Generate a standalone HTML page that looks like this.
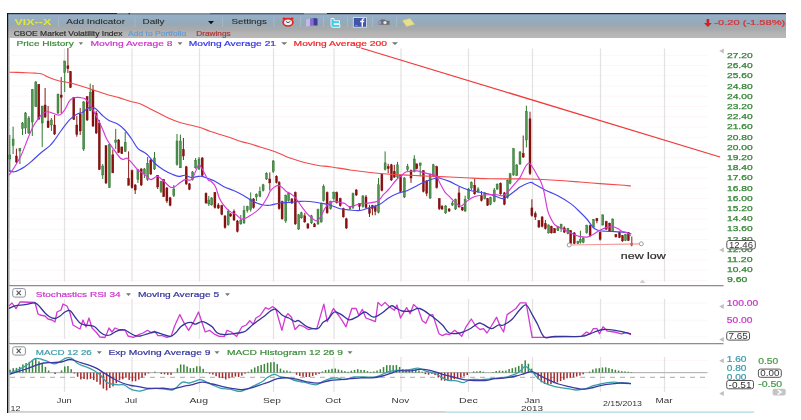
<!DOCTYPE html><html><head><meta charset="utf-8"><style>html,body{margin:0;padding:0;background:#fff;width:801px;height:420px;overflow:hidden}svg{display:block;filter:blur(0.35px)}</style></head><body>
<svg width="801" height="420" viewBox="0 0 801 420" font-family='"Liberation Sans", sans-serif'>
<defs><linearGradient id="hg" x1="0" y1="0" x2="0" y2="1"><stop offset="0" stop-color="#8fb0d0"/><stop offset="0.1" stop-color="#97b0c7"/><stop offset="0.24" stop-color="#95adc2"/><stop offset="0.42" stop-color="#93aab8"/><stop offset="0.5" stop-color="#a0a8ae"/><stop offset="0.68" stop-color="#a9abad"/><stop offset="0.8" stop-color="#b4b4b4"/><stop offset="1" stop-color="#b9b9b9"/></linearGradient></defs>
<rect width="801" height="420" fill="#fff"/>
<rect x="7" y="13" width="779" height="25" fill="url(#hg)"/>
<rect x="7" y="13" width="779" height="1.2" fill="#1e2b38"/>
<rect x="117" y="13" width="93" height="1.2" fill="#8d9196"/>
<rect x="128.5" y="13" width="1.5" height="1.2" fill="#333"/>
<rect x="210" y="13" width="94" height="1.2" fill="#4d6780"/>
<rect x="304" y="13" width="23" height="1.2" fill="#9a9ea2"/>
<rect x="58" y="17" width="0.8" height="10" fill="#b9c6d2" opacity="0.6"/>
<rect x="134.5" y="17" width="0.8" height="10" fill="#b9c6d2" opacity="0.6"/>
<rect x="222" y="17" width="0.8" height="10" fill="#b9c6d2" opacity="0.6"/>
<rect x="273.5" y="17" width="0.8" height="10" fill="#b9c6d2" opacity="0.6"/>
<rect x="300" y="17" width="0.8" height="10" fill="#b9c6d2" opacity="0.6"/>
<rect x="323" y="17" width="0.8" height="10" fill="#b9c6d2" opacity="0.6"/>
<rect x="347" y="17" width="0.8" height="10" fill="#b9c6d2" opacity="0.6"/>
<rect x="372" y="17" width="0.8" height="10" fill="#b9c6d2" opacity="0.6"/>
<rect x="396" y="17" width="0.8" height="10" fill="#b9c6d2" opacity="0.6"/>
<text x="14.50" y="25.24" font-size="8.5" font-weight="bold" fill="#e6e630" textLength="36.75" lengthAdjust="spacingAndGlyphs">VIX--X</text>
<text x="66.25" y="24.35" font-size="7.4" font-weight="normal" fill="#2b2b2b" stroke="#2b2b2b" stroke-width="0.08" textLength="58.75" lengthAdjust="spacingAndGlyphs">Add Indicator</text>
<text x="142.50" y="24.35" font-size="7.4" font-weight="normal" fill="#2b2b2b" stroke="#2b2b2b" stroke-width="0.08" textLength="22.00" lengthAdjust="spacingAndGlyphs">Daily</text>
<polygon points="208,21 214,21 211.0,24.2" fill="#111"/>
<text x="231.50" y="24.35" font-size="7.4" font-weight="normal" fill="#2b2b2b" stroke="#2b2b2b" stroke-width="0.08" textLength="35.40" lengthAdjust="spacingAndGlyphs">Settings</text>
<text x="13.75" y="35.86" font-size="6.3" font-weight="normal" fill="#2a2a2a" stroke="#2a2a2a" stroke-width="0.15" textLength="108.75" lengthAdjust="spacingAndGlyphs">CBOE Market Volatility Index</text>
<text x="128.00" y="35.86" font-size="6.3" font-weight="normal" fill="#5d9bd6" stroke="#5d9bd6" stroke-width="0.15" textLength="58.25" lengthAdjust="spacingAndGlyphs">Add to Portfolio</text>
<text x="196.25" y="35.86" font-size="6.3" font-weight="normal" fill="#b03030" stroke="#b03030" stroke-width="0.15" textLength="34.35" lengthAdjust="spacingAndGlyphs">Drawings</text>
<ellipse cx="288" cy="22.3" rx="4.9" ry="3.7" fill="#e6eef4" stroke="#e42222" stroke-width="1.7"/>
<ellipse cx="284" cy="18.6" rx="1.6" ry="1" fill="#e42222"/><ellipse cx="292" cy="18.6" rx="1.6" ry="1" fill="#e42222"/>
<path d="M286,21.4 L288,22.8 L290.4,21.2" stroke="#444" stroke-width="0.9" fill="none"/>
<polygon points="306,19.5 310,18.5 310,26 306,26.5" fill="#c4b8ea"/><polygon points="310,18.5 313.5,18 313.5,25.5 310,26" fill="#8070c8"/><polygon points="313.5,18 317.5,18.5 317.5,25.5 313.5,25.5" fill="#3e3a98"/>
<path d="M331,18.5 h3 v2.2 h5.5 v2.8 h-5.5 v1 h5.8 v2.8 h-6.8 q-2,0 -2,-2 z" fill="#3ccfe8" stroke="#f4fbff" stroke-width="0.9"/>
<rect x="353.3" y="17.6" width="13.2" height="9.6" fill="#3f56a8" stroke="#dfe6f2" stroke-width="0.8"/>
<path d="M361.6,26.8 v-4.6 h-1.4 v-1.4 h1.4 v-1 q0,-1.6 1.8,-1.6 h1 v1.3 h-0.8 q-0.6,0 -0.6,0.5 v0.8 h1.4 l-0.2,1.4 h-1.2 v4.6 z" fill="#fff"/>
<rect x="355" y="25" width="2.5" height="0.8" fill="#8e9ad0"/>
<path d="M378.5,21.2 l2.6,-1.8 h3.6 l1.8,1.3 h3 v4 h-11 z" fill="#6c6c6c"/><circle cx="385" cy="22.6" r="1.7" fill="#e4e4e4"/><rect x="378.5" y="20.8" width="2.6" height="3.6" fill="#9a94cc"/>
<polygon points="402.5,20.6 410,18.6 414.5,24.3 406.5,26.4" fill="#e8df8c" stroke="#d8cf70" stroke-width="0.6"/>
<path d="M706.6,19 h2.6 v4 h2.6 l-3.9,4 l-3.9,-4 h2.6 z" fill="#d42020"/>
<text x="714.30" y="25.15" font-size="7.4" font-weight="normal" fill="#dc3030" stroke="#dc3030" stroke-width="0.2" textLength="71.00" lengthAdjust="spacingAndGlyphs">-0.20 (-1.58%)</text>
<rect x="7" y="13" width="1.2" height="400" fill="#111"/>
<rect x="8.2" y="38" width="1.3" height="375" fill="#9a9a9a"/>
<rect x="9" y="285" width="714.5" height="1.2" fill="#8e8e8e"/><rect x="9" y="286.2" width="714.5" height="0.8" fill="#dcdcdc"/>
<rect x="9" y="343" width="714.5" height="1.2" fill="#8e8e8e"/><rect x="9" y="344.2" width="714.5" height="0.8" fill="#dcdcdc"/>
<rect x="9" y="411.2" width="436" height="1.5" fill="#c6c6c6"/>
<rect x="445" y="411.5" width="309" height="1.2" fill="#a8d6ea"/>
<rect x="9.5" y="54.80" width="698" height="1" fill="#fdf5f7"/>
<rect x="9.5" y="65.03" width="698" height="1" fill="#fdf5f7"/>
<rect x="9.5" y="75.26" width="698" height="1" fill="#fdf5f7"/>
<rect x="9.5" y="85.49" width="698" height="1" fill="#fdf5f7"/>
<rect x="9.5" y="95.72" width="698" height="1" fill="#fdf5f7"/>
<rect x="9.5" y="105.95" width="698" height="1" fill="#fdf5f7"/>
<rect x="9.5" y="116.18" width="698" height="1" fill="#fdf5f7"/>
<rect x="9.5" y="126.41" width="698" height="1" fill="#fdf5f7"/>
<rect x="9.5" y="136.64" width="698" height="1" fill="#fdf5f7"/>
<rect x="9.5" y="146.87" width="698" height="1" fill="#fdf5f7"/>
<rect x="9.5" y="157.10" width="698" height="1" fill="#fdf5f7"/>
<rect x="9.5" y="167.33" width="698" height="1" fill="#fdf5f7"/>
<rect x="9.5" y="177.56" width="698" height="1" fill="#fdf5f7"/>
<rect x="9.5" y="187.79" width="698" height="1" fill="#fdf5f7"/>
<rect x="9.5" y="198.02" width="698" height="1" fill="#fdf5f7"/>
<rect x="9.5" y="208.25" width="698" height="1" fill="#fdf5f7"/>
<rect x="9.5" y="218.48" width="698" height="1" fill="#fdf5f7"/>
<rect x="9.5" y="228.71" width="698" height="1" fill="#fdf5f7"/>
<rect x="9.5" y="238.94" width="698" height="1" fill="#fdf5f7"/>
<rect x="9.5" y="249.17" width="698" height="1" fill="#fdf5f7"/>
<rect x="9.5" y="259.40" width="698" height="1" fill="#fdf5f7"/>
<rect x="9.5" y="269.63" width="698" height="1" fill="#fdf5f7"/>
<rect x="9.5" y="279.86" width="698" height="1" fill="#fdf5f7"/>
<rect x="9.5" y="302.50" width="698" height="1" fill="#fdf5f7"/>
<rect x="9.5" y="319.70" width="698" height="1" fill="#fdf5f7"/>
<rect x="9.5" y="336.50" width="698" height="1" fill="#fdf5f7"/>
<rect x="9.5" y="360.00" width="698" height="1" fill="#fdf5f7"/>
<rect x="9.5" y="387.00" width="698" height="1" fill="#fdf5f7"/>
<rect x="63.90" y="48.5" width="1.2" height="233" fill="#e2e2e2"/>
<rect x="63.90" y="299" width="1.2" height="40" fill="#e2e2e2"/>
<rect x="63.90" y="357" width="1.2" height="35" fill="#e2e2e2"/>
<rect x="131.40" y="48.5" width="1.2" height="233" fill="#e2e2e2"/>
<rect x="131.40" y="299" width="1.2" height="40" fill="#e2e2e2"/>
<rect x="131.40" y="357" width="1.2" height="35" fill="#e2e2e2"/>
<rect x="198.90" y="48.5" width="1.2" height="233" fill="#e2e2e2"/>
<rect x="198.90" y="299" width="1.2" height="40" fill="#e2e2e2"/>
<rect x="198.90" y="357" width="1.2" height="35" fill="#e2e2e2"/>
<rect x="272.90" y="48.5" width="1.2" height="233" fill="#e2e2e2"/>
<rect x="272.90" y="299" width="1.2" height="40" fill="#e2e2e2"/>
<rect x="272.90" y="357" width="1.2" height="35" fill="#e2e2e2"/>
<rect x="333.40" y="48.5" width="1.2" height="233" fill="#e2e2e2"/>
<rect x="333.40" y="299" width="1.2" height="40" fill="#e2e2e2"/>
<rect x="333.40" y="357" width="1.2" height="35" fill="#e2e2e2"/>
<rect x="400.40" y="48.5" width="1.2" height="233" fill="#e2e2e2"/>
<rect x="400.40" y="299" width="1.2" height="40" fill="#e2e2e2"/>
<rect x="400.40" y="357" width="1.2" height="35" fill="#e2e2e2"/>
<rect x="467.90" y="48.5" width="1.2" height="233" fill="#e2e2e2"/>
<rect x="467.90" y="299" width="1.2" height="40" fill="#e2e2e2"/>
<rect x="467.90" y="357" width="1.2" height="35" fill="#e2e2e2"/>
<rect x="531.90" y="48.5" width="1.2" height="233" fill="#e2e2e2"/>
<rect x="531.90" y="299" width="1.2" height="40" fill="#e2e2e2"/>
<rect x="531.90" y="357" width="1.2" height="35" fill="#e2e2e2"/>
<rect x="599.90" y="48.5" width="1.2" height="233" fill="#e2e2e2"/>
<rect x="599.90" y="299" width="1.2" height="40" fill="#e2e2e2"/>
<rect x="599.90" y="357" width="1.2" height="35" fill="#e2e2e2"/>
<rect x="663.90" y="48.5" width="1.2" height="233" fill="#e2e2e2"/>
<rect x="663.90" y="299" width="1.2" height="40" fill="#e2e2e2"/>
<rect x="663.90" y="357" width="1.2" height="35" fill="#e2e2e2"/>
<rect x="9.5" y="372" width="698" height="1.2" fill="#b8b8b8"/>
<line x1="10" y1="377.3" x2="707" y2="377.3" stroke="#aaa" stroke-width="1" stroke-dasharray="5,5"/>
<text x="16.50" y="46.00" font-size="8" font-weight="normal" fill="#3a8a3a" stroke="#3a8a3a" stroke-width="0.2" textLength="57.25" lengthAdjust="spacingAndGlyphs">Price History</text>
<polygon points="78.7,42.3 83,42.3 80.85,45" fill="#777"/>
<text x="90.50" y="46.00" font-size="8" font-weight="normal" fill="#cc33cc" stroke="#cc33cc" stroke-width="0.2" textLength="82.00" lengthAdjust="spacingAndGlyphs">Moving Average 8</text>
<polygon points="177.5,42.3 182.5,42.3 180.0,45" fill="#777"/>
<text x="188.75" y="46.00" font-size="8" font-weight="normal" fill="#3333e6" stroke="#3333e6" stroke-width="0.2" textLength="87.25" lengthAdjust="spacingAndGlyphs">Moving Average 21</text>
<polygon points="281.2,42.3 287.3,42.3 284.25,45" fill="#777"/>
<text x="293.60" y="46.00" font-size="8" font-weight="normal" fill="#ee2424" stroke="#ee2424" stroke-width="0.2" textLength="93.40" lengthAdjust="spacingAndGlyphs">Moving Average 200</text>
<polygon points="391.9,42.3 398,42.3 394.95,45" fill="#777"/>
<rect x="9.30" y="135.00" width="1" height="37.00" fill="#2f7a2f"/>
<rect x="8.80" y="155.00" width="2.0" height="4.00" fill="#4e934e" stroke="#2a6a2a" stroke-width="0.4"/>
<rect x="12.60" y="126.70" width="1" height="27.30" fill="#2f7a2f"/>
<rect x="12.10" y="139.00" width="2.0" height="6.70" fill="#4e934e" stroke="#2a6a2a" stroke-width="0.4"/>
<rect x="15.90" y="148.60" width="1" height="14.40" fill="#8a1a1a"/>
<rect x="15.40" y="156.00" width="2.0" height="6.00" fill="#8b1010" stroke="#7a0d0d" stroke-width="0.4"/>
<rect x="19.40" y="148.00" width="1" height="16.00" fill="#2f7a2f"/>
<rect x="18.90" y="148.60" width="2.0" height="2.40" fill="#4e934e" stroke="#2a6a2a" stroke-width="0.4"/>
<rect x="22.00" y="122.00" width="1" height="13.00" fill="#2f7a2f"/>
<rect x="21.50" y="123.00" width="2.0" height="5.60" fill="#4e934e" stroke="#2a6a2a" stroke-width="0.4"/>
<rect x="25.00" y="112.00" width="1" height="22.00" fill="#2f7a2f"/>
<rect x="24.50" y="113.00" width="2.0" height="15.00" fill="#4e934e" stroke="#2a6a2a" stroke-width="0.4"/>
<rect x="28.30" y="116.00" width="1" height="18.00" fill="#2f7a2f"/>
<rect x="27.80" y="118.00" width="2.0" height="15.00" fill="#4e934e" stroke="#2a6a2a" stroke-width="0.4"/>
<rect x="31.80" y="89.00" width="1" height="47.00" fill="#2f7a2f"/>
<rect x="31.30" y="89.70" width="2.0" height="32.30" fill="#4e934e" stroke="#2a6a2a" stroke-width="0.4"/>
<rect x="35.30" y="81.00" width="1" height="26.00" fill="#2f7a2f"/>
<rect x="34.80" y="82.00" width="2.0" height="24.70" fill="#4e934e" stroke="#2a6a2a" stroke-width="0.4"/>
<rect x="38.30" y="84.00" width="1" height="36.00" fill="#8a1a1a"/>
<rect x="37.80" y="84.50" width="2.0" height="34.50" fill="#8b1010" stroke="#7a0d0d" stroke-width="0.4"/>
<rect x="41.70" y="106.00" width="1" height="41.00" fill="#2f7a2f"/>
<rect x="41.20" y="106.00" width="2.0" height="17.00" fill="#4e934e" stroke="#2a6a2a" stroke-width="0.4"/>
<rect x="44.60" y="88.00" width="1" height="30.00" fill="#8a1a1a"/>
<rect x="44.10" y="105.00" width="2.0" height="12.00" fill="#8b1010" stroke="#7a0d0d" stroke-width="0.4"/>
<rect x="47.60" y="106.00" width="1" height="22.00" fill="#8a1a1a"/>
<rect x="47.10" y="121.00" width="2.0" height="6.50" fill="#8b1010" stroke="#7a0d0d" stroke-width="0.4"/>
<rect x="50.90" y="118.00" width="1" height="13.00" fill="#2f7a2f"/>
<rect x="50.40" y="120.00" width="2.0" height="5.00" fill="#4e934e" stroke="#2a6a2a" stroke-width="0.4"/>
<rect x="54.10" y="115.00" width="1" height="20.00" fill="#8a1a1a"/>
<rect x="53.60" y="125.00" width="2.0" height="9.00" fill="#8b1010" stroke="#7a0d0d" stroke-width="0.4"/>
<rect x="57.50" y="94.00" width="1" height="20.00" fill="#2f7a2f"/>
<rect x="57.00" y="94.00" width="2.0" height="19.00" fill="#4e934e" stroke="#2a6a2a" stroke-width="0.4"/>
<rect x="60.70" y="77.00" width="1" height="36.00" fill="#8a1a1a"/>
<rect x="60.20" y="95.00" width="2.0" height="2.50" fill="#8b1010" stroke="#7a0d0d" stroke-width="0.4"/>
<rect x="64.20" y="60.80" width="1" height="31.20" fill="#2f7a2f"/>
<rect x="63.70" y="61.00" width="2.0" height="11.30" fill="#4e934e" stroke="#2a6a2a" stroke-width="0.4"/>
<rect x="67.40" y="48.00" width="1" height="25.00" fill="#8a1a1a"/>
<rect x="66.90" y="65.80" width="2.0" height="2.90" fill="#8b1010" stroke="#7a0d0d" stroke-width="0.4"/>
<rect x="70.00" y="71.00" width="1" height="17.00" fill="#8a1a1a"/>
<rect x="69.50" y="71.50" width="2.0" height="16.00" fill="#8b1010" stroke="#7a0d0d" stroke-width="0.4"/>
<rect x="73.30" y="97.00" width="1" height="23.00" fill="#8a1a1a"/>
<rect x="72.80" y="97.60" width="2.0" height="21.80" fill="#8b1010" stroke="#7a0d0d" stroke-width="0.4"/>
<rect x="76.30" y="116.00" width="1" height="20.70" fill="#8a1a1a"/>
<rect x="75.80" y="125.00" width="2.0" height="9.40" fill="#8b1010" stroke="#7a0d0d" stroke-width="0.4"/>
<rect x="79.70" y="108.00" width="1" height="27.00" fill="#8a1a1a"/>
<rect x="79.20" y="114.00" width="2.0" height="17.00" fill="#8b1010" stroke="#7a0d0d" stroke-width="0.4"/>
<rect x="83.20" y="101.00" width="1" height="50.00" fill="#2f7a2f"/>
<rect x="82.70" y="102.00" width="2.0" height="47.00" fill="#4e934e" stroke="#2a6a2a" stroke-width="0.4"/>
<rect x="86.60" y="96.00" width="1" height="25.00" fill="#8a1a1a"/>
<rect x="86.10" y="96.70" width="2.0" height="23.30" fill="#8b1010" stroke="#7a0d0d" stroke-width="0.4"/>
<rect x="89.70" y="83.60" width="1" height="27.40" fill="#2f7a2f"/>
<rect x="89.20" y="92.30" width="2.0" height="18.40" fill="#4e934e" stroke="#2a6a2a" stroke-width="0.4"/>
<rect x="92.50" y="85.00" width="1" height="42.00" fill="#8a1a1a"/>
<rect x="92.00" y="90.00" width="2.0" height="36.00" fill="#8b1010" stroke="#7a0d0d" stroke-width="0.4"/>
<rect x="95.70" y="111.00" width="1" height="23.00" fill="#8a1a1a"/>
<rect x="95.20" y="113.00" width="2.0" height="20.00" fill="#8b1010" stroke="#7a0d0d" stroke-width="0.4"/>
<rect x="98.80" y="120.00" width="1" height="50.00" fill="#8a1a1a"/>
<rect x="98.30" y="123.00" width="2.0" height="46.50" fill="#8b1010" stroke="#7a0d0d" stroke-width="0.4"/>
<rect x="102.20" y="164.00" width="1" height="15.00" fill="#2f7a2f"/>
<rect x="101.70" y="166.00" width="2.0" height="9.00" fill="#4e934e" stroke="#2a6a2a" stroke-width="0.4"/>
<rect x="105.50" y="145.70" width="1" height="38.30" fill="#8a1a1a"/>
<rect x="105.00" y="145.70" width="2.0" height="37.30" fill="#8b1010" stroke="#7a0d0d" stroke-width="0.4"/>
<rect x="108.90" y="143.60" width="1" height="44.40" fill="#2f7a2f"/>
<rect x="108.40" y="144.60" width="2.0" height="43.00" fill="#4e934e" stroke="#2a6a2a" stroke-width="0.4"/>
<rect x="112.30" y="149.50" width="1" height="23.50" fill="#8a1a1a"/>
<rect x="111.80" y="154.80" width="2.0" height="18.10" fill="#8b1010" stroke="#7a0d0d" stroke-width="0.4"/>
<rect x="115.20" y="128.80" width="1" height="20.20" fill="#2f7a2f"/>
<rect x="114.70" y="140.00" width="2.0" height="2.30" fill="#4e934e" stroke="#2a6a2a" stroke-width="0.4"/>
<rect x="118.20" y="139.00" width="1" height="14.00" fill="#8a1a1a"/>
<rect x="117.70" y="140.00" width="2.0" height="12.50" fill="#8b1010" stroke="#7a0d0d" stroke-width="0.4"/>
<rect x="121.30" y="146.90" width="1" height="7.10" fill="#8a1a1a"/>
<rect x="120.80" y="146.90" width="2.0" height="6.70" fill="#8b1010" stroke="#7a0d0d" stroke-width="0.4"/>
<rect x="124.70" y="132.00" width="1" height="20.00" fill="#2f7a2f"/>
<rect x="124.20" y="142.30" width="2.0" height="9.10" fill="#4e934e" stroke="#2a6a2a" stroke-width="0.4"/>
<rect x="128.10" y="151.40" width="1" height="33.90" fill="#8a1a1a"/>
<rect x="127.60" y="178.50" width="2.0" height="6.80" fill="#8b1010" stroke="#7a0d0d" stroke-width="0.4"/>
<rect x="131.50" y="169.60" width="1" height="19.00" fill="#8a1a1a"/>
<rect x="131.00" y="170.60" width="2.0" height="17.00" fill="#8b1010" stroke="#7a0d0d" stroke-width="0.4"/>
<rect x="134.70" y="184.00" width="1" height="10.00" fill="#8a1a1a"/>
<rect x="134.20" y="185.00" width="2.0" height="5.00" fill="#8b1010" stroke="#7a0d0d" stroke-width="0.4"/>
<rect x="137.40" y="169.50" width="1" height="13.50" fill="#2f7a2f"/>
<rect x="136.90" y="169.50" width="2.0" height="10.10" fill="#4e934e" stroke="#2a6a2a" stroke-width="0.4"/>
<rect x="140.70" y="168.00" width="1" height="18.00" fill="#8a1a1a"/>
<rect x="140.20" y="169.00" width="2.0" height="16.00" fill="#8b1010" stroke="#7a0d0d" stroke-width="0.4"/>
<rect x="143.90" y="168.00" width="1" height="10.00" fill="#2f7a2f"/>
<rect x="143.40" y="169.00" width="2.0" height="5.00" fill="#4e934e" stroke="#2a6a2a" stroke-width="0.4"/>
<rect x="147.10" y="157.00" width="1" height="24.00" fill="#2f7a2f"/>
<rect x="146.60" y="163.50" width="2.0" height="16.10" fill="#4e934e" stroke="#2a6a2a" stroke-width="0.4"/>
<rect x="150.30" y="159.00" width="1" height="16.00" fill="#8a1a1a"/>
<rect x="149.80" y="160.00" width="2.0" height="14.00" fill="#8b1010" stroke="#7a0d0d" stroke-width="0.4"/>
<rect x="154.00" y="152.00" width="1" height="18.00" fill="#2f7a2f"/>
<rect x="153.50" y="158.00" width="2.0" height="11.00" fill="#4e934e" stroke="#2a6a2a" stroke-width="0.4"/>
<rect x="157.20" y="175.00" width="1" height="14.00" fill="#8a1a1a"/>
<rect x="156.70" y="175.30" width="2.0" height="11.70" fill="#8b1010" stroke="#7a0d0d" stroke-width="0.4"/>
<rect x="160.50" y="180.70" width="1" height="12.30" fill="#2f7a2f"/>
<rect x="160.00" y="181.70" width="2.0" height="9.70" fill="#4e934e" stroke="#2a6a2a" stroke-width="0.4"/>
<rect x="163.20" y="179.00" width="1" height="18.00" fill="#8a1a1a"/>
<rect x="162.70" y="179.60" width="2.0" height="17.10" fill="#8b1010" stroke="#7a0d0d" stroke-width="0.4"/>
<rect x="166.40" y="187.00" width="1" height="16.00" fill="#8a1a1a"/>
<rect x="165.90" y="188.00" width="2.0" height="13.00" fill="#8b1010" stroke="#7a0d0d" stroke-width="0.4"/>
<rect x="169.60" y="196.80" width="1" height="9.50" fill="#8a1a1a"/>
<rect x="169.10" y="197.80" width="2.0" height="7.50" fill="#8b1010" stroke="#7a0d0d" stroke-width="0.4"/>
<rect x="173.30" y="185.00" width="1" height="12.00" fill="#2f7a2f"/>
<rect x="172.80" y="189.00" width="2.0" height="6.70" fill="#4e934e" stroke="#2a6a2a" stroke-width="0.4"/>
<rect x="176.50" y="134.00" width="1" height="31.60" fill="#2f7a2f"/>
<rect x="176.00" y="141.00" width="2.0" height="23.60" fill="#4e934e" stroke="#2a6a2a" stroke-width="0.4"/>
<rect x="179.90" y="134.60" width="1" height="33.40" fill="#2f7a2f"/>
<rect x="179.40" y="141.00" width="2.0" height="26.80" fill="#4e934e" stroke="#2a6a2a" stroke-width="0.4"/>
<rect x="182.90" y="138.00" width="1" height="22.00" fill="#8a1a1a"/>
<rect x="182.40" y="149.60" width="2.0" height="6.40" fill="#8b1010" stroke="#7a0d0d" stroke-width="0.4"/>
<rect x="185.70" y="165.80" width="1" height="19.10" fill="#8a1a1a"/>
<rect x="185.20" y="166.80" width="2.0" height="17.10" fill="#8b1010" stroke="#7a0d0d" stroke-width="0.4"/>
<rect x="188.90" y="182.90" width="1" height="7.30" fill="#8a1a1a"/>
<rect x="188.40" y="183.90" width="2.0" height="5.30" fill="#8b1010" stroke="#7a0d0d" stroke-width="0.4"/>
<rect x="192.10" y="171.00" width="1" height="9.60" fill="#2f7a2f"/>
<rect x="191.60" y="172.00" width="2.0" height="7.60" fill="#4e934e" stroke="#2a6a2a" stroke-width="0.4"/>
<rect x="195.10" y="158.00" width="1" height="10.80" fill="#2f7a2f"/>
<rect x="194.60" y="160.30" width="2.0" height="7.50" fill="#4e934e" stroke="#2a6a2a" stroke-width="0.4"/>
<rect x="198.50" y="157.00" width="1" height="13.00" fill="#2f7a2f"/>
<rect x="198.00" y="159.00" width="2.0" height="10.00" fill="#4e934e" stroke="#2a6a2a" stroke-width="0.4"/>
<rect x="201.70" y="157.00" width="1" height="20.00" fill="#8a1a1a"/>
<rect x="201.20" y="158.00" width="2.0" height="17.30" fill="#8b1010" stroke="#7a0d0d" stroke-width="0.4"/>
<rect x="205.50" y="192.40" width="1" height="11.50" fill="#8a1a1a"/>
<rect x="205.00" y="193.30" width="2.0" height="9.60" fill="#8b1010" stroke="#7a0d0d" stroke-width="0.4"/>
<rect x="208.30" y="196.00" width="1" height="10.00" fill="#2f7a2f"/>
<rect x="207.80" y="200.00" width="2.0" height="4.00" fill="#4e934e" stroke="#2a6a2a" stroke-width="0.4"/>
<rect x="211.20" y="197.00" width="1" height="8.80" fill="#2f7a2f"/>
<rect x="210.70" y="198.00" width="2.0" height="6.80" fill="#4e934e" stroke="#2a6a2a" stroke-width="0.4"/>
<rect x="214.40" y="192.00" width="1" height="16.60" fill="#8a1a1a"/>
<rect x="213.90" y="192.40" width="2.0" height="15.20" fill="#8b1010" stroke="#7a0d0d" stroke-width="0.4"/>
<rect x="217.80" y="203.00" width="1" height="6.00" fill="#8a1a1a"/>
<rect x="217.30" y="205.00" width="2.0" height="3.00" fill="#8b1010" stroke="#7a0d0d" stroke-width="0.4"/>
<rect x="221.30" y="204.70" width="1" height="10.60" fill="#8a1a1a"/>
<rect x="220.80" y="205.70" width="2.0" height="8.60" fill="#8b1010" stroke="#7a0d0d" stroke-width="0.4"/>
<rect x="224.50" y="215.00" width="1" height="13.60" fill="#8a1a1a"/>
<rect x="224.00" y="216.00" width="2.0" height="11.60" fill="#8b1010" stroke="#7a0d0d" stroke-width="0.4"/>
<rect x="227.70" y="209.40" width="1" height="16.40" fill="#2f7a2f"/>
<rect x="227.20" y="211.40" width="2.0" height="13.40" fill="#4e934e" stroke="#2a6a2a" stroke-width="0.4"/>
<rect x="230.20" y="213.00" width="1" height="4.00" fill="#8a1a1a"/>
<rect x="229.70" y="214.00" width="2.0" height="2.00" fill="#8b1010" stroke="#7a0d0d" stroke-width="0.4"/>
<rect x="233.50" y="209.40" width="1" height="11.60" fill="#8a1a1a"/>
<rect x="233.00" y="211.40" width="2.0" height="8.60" fill="#8b1010" stroke="#7a0d0d" stroke-width="0.4"/>
<rect x="236.90" y="220.00" width="1" height="12.40" fill="#8a1a1a"/>
<rect x="236.40" y="221.00" width="2.0" height="10.40" fill="#8b1010" stroke="#7a0d0d" stroke-width="0.4"/>
<rect x="240.30" y="215.00" width="1" height="9.80" fill="#2f7a2f"/>
<rect x="239.80" y="220.00" width="2.0" height="3.80" fill="#4e934e" stroke="#2a6a2a" stroke-width="0.4"/>
<rect x="243.50" y="205.70" width="1" height="18.20" fill="#2f7a2f"/>
<rect x="243.00" y="210.50" width="2.0" height="12.40" fill="#4e934e" stroke="#2a6a2a" stroke-width="0.4"/>
<rect x="246.80" y="205.70" width="1" height="6.80" fill="#2f7a2f"/>
<rect x="246.30" y="206.70" width="2.0" height="3.80" fill="#4e934e" stroke="#2a6a2a" stroke-width="0.4"/>
<rect x="250.20" y="192.40" width="1" height="19.10" fill="#2f7a2f"/>
<rect x="249.70" y="199.00" width="2.0" height="10.50" fill="#4e934e" stroke="#2a6a2a" stroke-width="0.4"/>
<rect x="253.10" y="198.00" width="1" height="10.60" fill="#8a1a1a"/>
<rect x="252.60" y="199.00" width="2.0" height="8.60" fill="#8b1010" stroke="#7a0d0d" stroke-width="0.4"/>
<rect x="255.90" y="193.30" width="1" height="7.70" fill="#2f7a2f"/>
<rect x="255.40" y="194.30" width="2.0" height="2.70" fill="#4e934e" stroke="#2a6a2a" stroke-width="0.4"/>
<rect x="259.40" y="186.70" width="1" height="10.50" fill="#2f7a2f"/>
<rect x="258.90" y="191.40" width="2.0" height="4.80" fill="#4e934e" stroke="#2a6a2a" stroke-width="0.4"/>
<rect x="262.60" y="183.80" width="1" height="7.70" fill="#2f7a2f"/>
<rect x="262.10" y="184.80" width="2.0" height="5.70" fill="#4e934e" stroke="#2a6a2a" stroke-width="0.4"/>
<rect x="266.00" y="172.30" width="1" height="7.70" fill="#2f7a2f"/>
<rect x="265.50" y="173.30" width="2.0" height="5.70" fill="#4e934e" stroke="#2a6a2a" stroke-width="0.4"/>
<rect x="269.30" y="172.40" width="1" height="18.10" fill="#8a1a1a"/>
<rect x="268.80" y="179.00" width="2.0" height="3.90" fill="#8b1010" stroke="#7a0d0d" stroke-width="0.4"/>
<rect x="272.70" y="160.00" width="1" height="13.00" fill="#2f7a2f"/>
<rect x="272.20" y="161.00" width="2.0" height="10.40" fill="#4e934e" stroke="#2a6a2a" stroke-width="0.4"/>
<rect x="276.00" y="175.30" width="1" height="8.10" fill="#8a1a1a"/>
<rect x="275.50" y="176.30" width="2.0" height="6.10" fill="#8b1010" stroke="#7a0d0d" stroke-width="0.4"/>
<rect x="278.60" y="181.00" width="1" height="28.70" fill="#8a1a1a"/>
<rect x="278.10" y="182.40" width="2.0" height="26.30" fill="#8b1010" stroke="#7a0d0d" stroke-width="0.4"/>
<rect x="281.60" y="200.60" width="1" height="19.20" fill="#8a1a1a"/>
<rect x="281.10" y="201.60" width="2.0" height="17.20" fill="#8b1010" stroke="#7a0d0d" stroke-width="0.4"/>
<rect x="285.30" y="194.50" width="1" height="28.40" fill="#2f7a2f"/>
<rect x="284.80" y="195.50" width="2.0" height="25.40" fill="#4e934e" stroke="#2a6a2a" stroke-width="0.4"/>
<rect x="288.10" y="192.50" width="1" height="9.10" fill="#2f7a2f"/>
<rect x="287.60" y="193.50" width="2.0" height="7.10" fill="#4e934e" stroke="#2a6a2a" stroke-width="0.4"/>
<rect x="291.40" y="198.00" width="1" height="6.00" fill="#8a1a1a"/>
<rect x="290.90" y="199.00" width="2.0" height="4.00" fill="#8b1010" stroke="#7a0d0d" stroke-width="0.4"/>
<rect x="294.80" y="191.50" width="1" height="33.40" fill="#8a1a1a"/>
<rect x="294.30" y="192.50" width="2.0" height="31.40" fill="#8b1010" stroke="#7a0d0d" stroke-width="0.4"/>
<rect x="298.20" y="213.80" width="1" height="16.20" fill="#2f7a2f"/>
<rect x="297.70" y="214.80" width="2.0" height="14.20" fill="#4e934e" stroke="#2a6a2a" stroke-width="0.4"/>
<rect x="300.90" y="211.70" width="1" height="7.10" fill="#2f7a2f"/>
<rect x="300.40" y="212.80" width="2.0" height="5.00" fill="#4e934e" stroke="#2a6a2a" stroke-width="0.4"/>
<rect x="304.30" y="212.80" width="1" height="10.10" fill="#8a1a1a"/>
<rect x="303.80" y="215.80" width="2.0" height="6.10" fill="#8b1010" stroke="#7a0d0d" stroke-width="0.4"/>
<rect x="307.40" y="223.00" width="1" height="6.00" fill="#8a1a1a"/>
<rect x="306.90" y="223.90" width="2.0" height="4.10" fill="#8b1010" stroke="#7a0d0d" stroke-width="0.4"/>
<rect x="311.00" y="214.80" width="1" height="9.10" fill="#2f7a2f"/>
<rect x="310.50" y="215.80" width="2.0" height="7.10" fill="#4e934e" stroke="#2a6a2a" stroke-width="0.4"/>
<rect x="314.00" y="222.90" width="1" height="4.10" fill="#8a1a1a"/>
<rect x="313.50" y="223.90" width="2.0" height="3.00" fill="#8b1010" stroke="#7a0d0d" stroke-width="0.4"/>
<rect x="317.50" y="208.70" width="1" height="16.20" fill="#2f7a2f"/>
<rect x="317.00" y="209.70" width="2.0" height="14.20" fill="#4e934e" stroke="#2a6a2a" stroke-width="0.4"/>
<rect x="320.70" y="202.60" width="1" height="20.30" fill="#2f7a2f"/>
<rect x="320.20" y="203.60" width="2.0" height="18.30" fill="#4e934e" stroke="#2a6a2a" stroke-width="0.4"/>
<rect x="323.10" y="184.40" width="1" height="17.20" fill="#2f7a2f"/>
<rect x="322.60" y="186.40" width="2.0" height="14.20" fill="#4e934e" stroke="#2a6a2a" stroke-width="0.4"/>
<rect x="326.60" y="191.50" width="1" height="22.30" fill="#8a1a1a"/>
<rect x="326.10" y="192.50" width="2.0" height="20.30" fill="#8b1010" stroke="#7a0d0d" stroke-width="0.4"/>
<rect x="330.20" y="200.60" width="1" height="9.10" fill="#2f7a2f"/>
<rect x="329.70" y="201.60" width="2.0" height="7.10" fill="#4e934e" stroke="#2a6a2a" stroke-width="0.4"/>
<rect x="333.30" y="191.50" width="1" height="9.10" fill="#2f7a2f"/>
<rect x="332.80" y="192.50" width="2.0" height="6.10" fill="#4e934e" stroke="#2a6a2a" stroke-width="0.4"/>
<rect x="336.30" y="191.50" width="1" height="12.10" fill="#8a1a1a"/>
<rect x="335.80" y="192.50" width="2.0" height="10.10" fill="#8b1010" stroke="#7a0d0d" stroke-width="0.4"/>
<rect x="339.70" y="197.60" width="1" height="9.10" fill="#8a1a1a"/>
<rect x="339.20" y="198.60" width="2.0" height="7.10" fill="#8b1010" stroke="#7a0d0d" stroke-width="0.4"/>
<rect x="342.80" y="207.70" width="1" height="10.10" fill="#8a1a1a"/>
<rect x="342.30" y="208.70" width="2.0" height="8.10" fill="#8b1010" stroke="#7a0d0d" stroke-width="0.4"/>
<rect x="345.80" y="217.80" width="1" height="11.20" fill="#8a1a1a"/>
<rect x="345.30" y="218.80" width="2.0" height="9.20" fill="#8b1010" stroke="#7a0d0d" stroke-width="0.4"/>
<rect x="349.50" y="206.00" width="1" height="4.00" fill="#2f7a2f"/>
<rect x="349.00" y="206.25" width="2.0" height="2.50" fill="#4e934e" stroke="#2a6a2a" stroke-width="0.4"/>
<rect x="352.50" y="192.50" width="1" height="16.50" fill="#2f7a2f"/>
<rect x="352.00" y="193.75" width="2.0" height="13.75" fill="#4e934e" stroke="#2a6a2a" stroke-width="0.4"/>
<rect x="355.75" y="189.00" width="1" height="7.00" fill="#8a1a1a"/>
<rect x="355.25" y="190.00" width="2.0" height="5.00" fill="#8b1010" stroke="#7a0d0d" stroke-width="0.4"/>
<rect x="359.00" y="203.00" width="1" height="8.00" fill="#8a1a1a"/>
<rect x="358.50" y="203.75" width="2.0" height="2.50" fill="#8b1010" stroke="#7a0d0d" stroke-width="0.4"/>
<rect x="362.40" y="195.00" width="1" height="12.70" fill="#2f7a2f"/>
<rect x="361.90" y="196.00" width="2.0" height="10.70" fill="#4e934e" stroke="#2a6a2a" stroke-width="0.4"/>
<rect x="365.50" y="195.00" width="1" height="13.60" fill="#8a1a1a"/>
<rect x="365.00" y="197.00" width="2.0" height="10.60" fill="#8b1010" stroke="#7a0d0d" stroke-width="0.4"/>
<rect x="369.00" y="204.80" width="1" height="12.20" fill="#8a1a1a"/>
<rect x="368.50" y="208.60" width="2.0" height="4.70" fill="#8b1010" stroke="#7a0d0d" stroke-width="0.4"/>
<rect x="371.90" y="204.80" width="1" height="10.50" fill="#8a1a1a"/>
<rect x="371.40" y="205.70" width="2.0" height="2.90" fill="#8b1010" stroke="#7a0d0d" stroke-width="0.4"/>
<rect x="374.70" y="204.80" width="1" height="10.50" fill="#8a1a1a"/>
<rect x="374.20" y="206.70" width="2.0" height="4.70" fill="#8b1010" stroke="#7a0d0d" stroke-width="0.4"/>
<rect x="378.00" y="178.00" width="1" height="35.30" fill="#2f7a2f"/>
<rect x="377.50" y="184.80" width="2.0" height="27.60" fill="#4e934e" stroke="#2a6a2a" stroke-width="0.4"/>
<rect x="381.40" y="173.30" width="1" height="18.10" fill="#8a1a1a"/>
<rect x="380.90" y="174.30" width="2.0" height="16.20" fill="#8b1010" stroke="#7a0d0d" stroke-width="0.4"/>
<rect x="384.60" y="151.40" width="1" height="19.10" fill="#2f7a2f"/>
<rect x="384.10" y="162.90" width="2.0" height="6.60" fill="#4e934e" stroke="#2a6a2a" stroke-width="0.4"/>
<rect x="387.70" y="163.80" width="1" height="9.50" fill="#8a1a1a"/>
<rect x="387.20" y="166.70" width="2.0" height="1.90" fill="#8b1010" stroke="#7a0d0d" stroke-width="0.4"/>
<rect x="390.90" y="163.80" width="1" height="17.20" fill="#8a1a1a"/>
<rect x="390.40" y="164.80" width="2.0" height="15.20" fill="#8b1010" stroke="#7a0d0d" stroke-width="0.4"/>
<rect x="393.80" y="164.80" width="1" height="13.20" fill="#8a1a1a"/>
<rect x="393.30" y="171.40" width="2.0" height="5.70" fill="#8b1010" stroke="#7a0d0d" stroke-width="0.4"/>
<rect x="397.00" y="161.90" width="1" height="16.10" fill="#2f7a2f"/>
<rect x="396.50" y="164.80" width="2.0" height="12.20" fill="#4e934e" stroke="#2a6a2a" stroke-width="0.4"/>
<rect x="400.10" y="175.20" width="1" height="17.20" fill="#8a1a1a"/>
<rect x="399.60" y="175.20" width="2.0" height="16.20" fill="#8b1010" stroke="#7a0d0d" stroke-width="0.4"/>
<rect x="403.90" y="177.10" width="1" height="20.90" fill="#2f7a2f"/>
<rect x="403.40" y="178.00" width="2.0" height="19.00" fill="#4e934e" stroke="#2a6a2a" stroke-width="0.4"/>
<rect x="407.10" y="163.80" width="1" height="7.60" fill="#2f7a2f"/>
<rect x="406.60" y="166.70" width="2.0" height="2.80" fill="#4e934e" stroke="#2a6a2a" stroke-width="0.4"/>
<rect x="410.50" y="169.50" width="1" height="13.40" fill="#8a1a1a"/>
<rect x="410.00" y="170.50" width="2.0" height="7.50" fill="#8b1010" stroke="#7a0d0d" stroke-width="0.4"/>
<rect x="413.80" y="155.20" width="1" height="17.20" fill="#2f7a2f"/>
<rect x="413.30" y="159.00" width="2.0" height="12.40" fill="#4e934e" stroke="#2a6a2a" stroke-width="0.4"/>
<rect x="416.30" y="163.80" width="1" height="5.70" fill="#8a1a1a"/>
<rect x="415.80" y="163.80" width="2.0" height="4.80" fill="#8b1010" stroke="#7a0d0d" stroke-width="0.4"/>
<rect x="419.70" y="162.90" width="1" height="13.30" fill="#2f7a2f"/>
<rect x="419.20" y="162.90" width="2.0" height="2.80" fill="#4e934e" stroke="#2a6a2a" stroke-width="0.4"/>
<rect x="422.90" y="170.50" width="1" height="21.90" fill="#8a1a1a"/>
<rect x="422.40" y="170.50" width="2.0" height="20.90" fill="#8b1010" stroke="#7a0d0d" stroke-width="0.4"/>
<rect x="426.20" y="180.00" width="1" height="16.20" fill="#8a1a1a"/>
<rect x="425.70" y="181.00" width="2.0" height="12.30" fill="#8b1010" stroke="#7a0d0d" stroke-width="0.4"/>
<rect x="429.60" y="173.30" width="1" height="25.70" fill="#2f7a2f"/>
<rect x="429.10" y="174.30" width="2.0" height="23.70" fill="#4e934e" stroke="#2a6a2a" stroke-width="0.4"/>
<rect x="432.80" y="163.80" width="1" height="13.30" fill="#2f7a2f"/>
<rect x="432.30" y="164.80" width="2.0" height="11.40" fill="#4e934e" stroke="#2a6a2a" stroke-width="0.4"/>
<rect x="436.30" y="165.70" width="1" height="22.90" fill="#8a1a1a"/>
<rect x="435.80" y="166.70" width="2.0" height="20.90" fill="#8b1010" stroke="#7a0d0d" stroke-width="0.4"/>
<rect x="438.75" y="198.00" width="1" height="12.00" fill="#8a1a1a"/>
<rect x="438.25" y="198.75" width="2.0" height="10.00" fill="#8b1010" stroke="#7a0d0d" stroke-width="0.4"/>
<rect x="441.50" y="205.00" width="1" height="5.00" fill="#8a1a1a"/>
<rect x="441.00" y="206.30" width="2.0" height="2.70" fill="#8b1010" stroke="#7a0d0d" stroke-width="0.4"/>
<rect x="445.20" y="205.00" width="1" height="8.90" fill="#2f7a2f"/>
<rect x="444.70" y="206.00" width="2.0" height="6.90" fill="#4e934e" stroke="#2a6a2a" stroke-width="0.4"/>
<rect x="448.60" y="208.00" width="1" height="4.00" fill="#8a1a1a"/>
<rect x="448.10" y="209.00" width="2.0" height="2.00" fill="#8b1010" stroke="#7a0d0d" stroke-width="0.4"/>
<rect x="451.90" y="201.00" width="1" height="5.00" fill="#2f7a2f"/>
<rect x="451.40" y="203.00" width="2.0" height="2.00" fill="#4e934e" stroke="#2a6a2a" stroke-width="0.4"/>
<rect x="455.10" y="198.50" width="1" height="11.50" fill="#2f7a2f"/>
<rect x="454.60" y="199.50" width="2.0" height="9.50" fill="#4e934e" stroke="#2a6a2a" stroke-width="0.4"/>
<rect x="458.50" y="187.00" width="1" height="20.10" fill="#8a1a1a"/>
<rect x="458.00" y="192.90" width="2.0" height="14.20" fill="#8b1010" stroke="#7a0d0d" stroke-width="0.4"/>
<rect x="461.80" y="207.00" width="1" height="4.00" fill="#8a1a1a"/>
<rect x="461.30" y="207.10" width="2.0" height="2.90" fill="#8b1010" stroke="#7a0d0d" stroke-width="0.4"/>
<rect x="464.60" y="195.70" width="1" height="16.30" fill="#2f7a2f"/>
<rect x="464.10" y="199.50" width="2.0" height="11.50" fill="#4e934e" stroke="#2a6a2a" stroke-width="0.4"/>
<rect x="468.10" y="188.00" width="1" height="11.50" fill="#2f7a2f"/>
<rect x="467.60" y="189.00" width="2.0" height="9.60" fill="#4e934e" stroke="#2a6a2a" stroke-width="0.4"/>
<rect x="470.90" y="181.40" width="1" height="8.60" fill="#2f7a2f"/>
<rect x="470.40" y="182.40" width="2.0" height="5.60" fill="#4e934e" stroke="#2a6a2a" stroke-width="0.4"/>
<rect x="474.20" y="178.60" width="1" height="16.20" fill="#8a1a1a"/>
<rect x="473.70" y="185.20" width="2.0" height="8.60" fill="#8b1010" stroke="#7a0d0d" stroke-width="0.4"/>
<rect x="477.60" y="187.10" width="1" height="5.80" fill="#2f7a2f"/>
<rect x="477.10" y="189.00" width="2.0" height="2.00" fill="#4e934e" stroke="#2a6a2a" stroke-width="0.4"/>
<rect x="481.00" y="191.00" width="1" height="10.50" fill="#8a1a1a"/>
<rect x="480.50" y="195.70" width="2.0" height="4.80" fill="#8b1010" stroke="#7a0d0d" stroke-width="0.4"/>
<rect x="484.30" y="191.90" width="1" height="7.60" fill="#2f7a2f"/>
<rect x="483.80" y="192.90" width="2.0" height="5.70" fill="#4e934e" stroke="#2a6a2a" stroke-width="0.4"/>
<rect x="487.10" y="198.00" width="1" height="8.00" fill="#8a1a1a"/>
<rect x="486.60" y="198.60" width="2.0" height="6.60" fill="#8b1010" stroke="#7a0d0d" stroke-width="0.4"/>
<rect x="490.00" y="196.70" width="1" height="8.50" fill="#2f7a2f"/>
<rect x="489.50" y="197.60" width="2.0" height="6.70" fill="#4e934e" stroke="#2a6a2a" stroke-width="0.4"/>
<rect x="493.80" y="188.00" width="1" height="14.40" fill="#2f7a2f"/>
<rect x="493.30" y="190.00" width="2.0" height="11.40" fill="#4e934e" stroke="#2a6a2a" stroke-width="0.4"/>
<rect x="496.60" y="183.30" width="1" height="6.70" fill="#2f7a2f"/>
<rect x="496.10" y="184.30" width="2.0" height="4.70" fill="#4e934e" stroke="#2a6a2a" stroke-width="0.4"/>
<rect x="500.10" y="182.40" width="1" height="12.40" fill="#8a1a1a"/>
<rect x="499.60" y="183.30" width="2.0" height="10.50" fill="#8b1010" stroke="#7a0d0d" stroke-width="0.4"/>
<rect x="503.90" y="191.90" width="1" height="13.30" fill="#8a1a1a"/>
<rect x="503.40" y="192.90" width="2.0" height="11.40" fill="#8b1010" stroke="#7a0d0d" stroke-width="0.4"/>
<rect x="507.10" y="179.50" width="1" height="19.10" fill="#2f7a2f"/>
<rect x="506.60" y="180.50" width="2.0" height="17.10" fill="#4e934e" stroke="#2a6a2a" stroke-width="0.4"/>
<rect x="509.60" y="172.90" width="1" height="11.40" fill="#2f7a2f"/>
<rect x="509.10" y="173.80" width="2.0" height="9.50" fill="#4e934e" stroke="#2a6a2a" stroke-width="0.4"/>
<rect x="513.00" y="148.30" width="1" height="27.40" fill="#2f7a2f"/>
<rect x="512.50" y="148.75" width="2.0" height="26.25" fill="#4e934e" stroke="#2a6a2a" stroke-width="0.4"/>
<rect x="516.30" y="164.00" width="1" height="12.00" fill="#2f7a2f"/>
<rect x="515.80" y="165.00" width="2.0" height="10.50" fill="#4e934e" stroke="#2a6a2a" stroke-width="0.4"/>
<rect x="519.50" y="151.00" width="1" height="14.00" fill="#2f7a2f"/>
<rect x="519.00" y="152.00" width="2.0" height="12.00" fill="#4e934e" stroke="#2a6a2a" stroke-width="0.4"/>
<rect x="522.70" y="135.50" width="1" height="22.50" fill="#8a1a1a"/>
<rect x="522.20" y="153.50" width="2.0" height="3.50" fill="#8b1010" stroke="#7a0d0d" stroke-width="0.4"/>
<rect x="525.90" y="105.70" width="1" height="41.70" fill="#2f7a2f"/>
<rect x="525.40" y="111.70" width="2.0" height="28.30" fill="#4e934e" stroke="#2a6a2a" stroke-width="0.4"/>
<rect x="529.50" y="111.70" width="1" height="63.30" fill="#8a1a1a"/>
<rect x="529.00" y="118.80" width="2.0" height="54.80" fill="#8b1010" stroke="#7a0d0d" stroke-width="0.4"/>
<rect x="531.40" y="199.30" width="1" height="17.40" fill="#8a1a1a"/>
<rect x="530.90" y="207.90" width="2.0" height="7.80" fill="#8b1010" stroke="#7a0d0d" stroke-width="0.4"/>
<rect x="534.80" y="211.40" width="1" height="8.60" fill="#8a1a1a"/>
<rect x="534.30" y="213.60" width="2.0" height="3.40" fill="#8b1010" stroke="#7a0d0d" stroke-width="0.4"/>
<rect x="538.40" y="220.00" width="1" height="8.00" fill="#8a1a1a"/>
<rect x="537.90" y="220.70" width="2.0" height="6.30" fill="#8b1010" stroke="#7a0d0d" stroke-width="0.4"/>
<rect x="541.60" y="216.00" width="1" height="11.40" fill="#8a1a1a"/>
<rect x="541.10" y="217.00" width="2.0" height="9.40" fill="#8b1010" stroke="#7a0d0d" stroke-width="0.4"/>
<rect x="544.90" y="220.00" width="1" height="9.60" fill="#8a1a1a"/>
<rect x="544.40" y="223.60" width="2.0" height="5.00" fill="#8b1010" stroke="#7a0d0d" stroke-width="0.4"/>
<rect x="548.10" y="224.30" width="1" height="9.30" fill="#2f7a2f"/>
<rect x="547.60" y="225.00" width="2.0" height="7.90" fill="#4e934e" stroke="#2a6a2a" stroke-width="0.4"/>
<rect x="550.90" y="225.70" width="1" height="7.90" fill="#8a1a1a"/>
<rect x="550.40" y="226.40" width="2.0" height="6.50" fill="#8b1010" stroke="#7a0d0d" stroke-width="0.4"/>
<rect x="554.10" y="228.00" width="1" height="5.00" fill="#8a1a1a"/>
<rect x="553.60" y="228.60" width="2.0" height="4.30" fill="#8b1010" stroke="#7a0d0d" stroke-width="0.4"/>
<rect x="557.40" y="226.00" width="1" height="5.00" fill="#2f7a2f"/>
<rect x="556.90" y="227.00" width="2.0" height="3.70" fill="#4e934e" stroke="#2a6a2a" stroke-width="0.4"/>
<rect x="560.60" y="223.60" width="1" height="8.40" fill="#2f7a2f"/>
<rect x="560.10" y="224.30" width="2.0" height="4.30" fill="#4e934e" stroke="#2a6a2a" stroke-width="0.4"/>
<rect x="563.80" y="226.40" width="1" height="6.60" fill="#8a1a1a"/>
<rect x="563.30" y="227.90" width="2.0" height="4.20" fill="#8b1010" stroke="#7a0d0d" stroke-width="0.4"/>
<rect x="567.40" y="227.90" width="1" height="6.40" fill="#2f7a2f"/>
<rect x="566.90" y="228.60" width="2.0" height="5.00" fill="#4e934e" stroke="#2a6a2a" stroke-width="0.4"/>
<rect x="570.20" y="230.00" width="1" height="14.30" fill="#8a1a1a"/>
<rect x="569.70" y="230.70" width="2.0" height="12.90" fill="#8b1010" stroke="#7a0d0d" stroke-width="0.4"/>
<rect x="573.80" y="232.00" width="1" height="12.30" fill="#8a1a1a"/>
<rect x="573.30" y="232.90" width="2.0" height="10.70" fill="#8b1010" stroke="#7a0d0d" stroke-width="0.4"/>
<rect x="577.40" y="240.70" width="1" height="3.30" fill="#2f7a2f"/>
<rect x="576.90" y="241.40" width="2.0" height="2.20" fill="#4e934e" stroke="#2a6a2a" stroke-width="0.4"/>
<rect x="579.90" y="230.70" width="1" height="12.90" fill="#2f7a2f"/>
<rect x="579.40" y="239.30" width="2.0" height="2.80" fill="#4e934e" stroke="#2a6a2a" stroke-width="0.4"/>
<rect x="582.70" y="237.00" width="1" height="6.30" fill="#2f7a2f"/>
<rect x="582.20" y="238.00" width="2.0" height="4.30" fill="#4e934e" stroke="#2a6a2a" stroke-width="0.4"/>
<rect x="586.30" y="224.60" width="1" height="9.10" fill="#2f7a2f"/>
<rect x="585.80" y="225.60" width="2.0" height="7.10" fill="#4e934e" stroke="#2a6a2a" stroke-width="0.4"/>
<rect x="589.60" y="224.60" width="1" height="12.10" fill="#8a1a1a"/>
<rect x="589.10" y="225.60" width="2.0" height="10.10" fill="#8b1010" stroke="#7a0d0d" stroke-width="0.4"/>
<rect x="593.00" y="219.00" width="1" height="9.40" fill="#2f7a2f"/>
<rect x="592.50" y="219.60" width="2.0" height="7.80" fill="#4e934e" stroke="#2a6a2a" stroke-width="0.4"/>
<rect x="596.40" y="217.90" width="1" height="5.30" fill="#8a1a1a"/>
<rect x="595.90" y="218.50" width="2.0" height="2.30" fill="#8b1010" stroke="#7a0d0d" stroke-width="0.4"/>
<rect x="599.60" y="231.50" width="1" height="9.00" fill="#8a1a1a"/>
<rect x="599.10" y="232.10" width="2.0" height="7.20" fill="#8b1010" stroke="#7a0d0d" stroke-width="0.4"/>
<rect x="602.30" y="214.30" width="1" height="11.30" fill="#2f7a2f"/>
<rect x="601.80" y="214.90" width="2.0" height="10.10" fill="#4e934e" stroke="#2a6a2a" stroke-width="0.4"/>
<rect x="605.70" y="220.80" width="1" height="9.00" fill="#8a1a1a"/>
<rect x="605.20" y="221.40" width="2.0" height="7.80" fill="#8b1010" stroke="#7a0d0d" stroke-width="0.4"/>
<rect x="609.10" y="222.60" width="1" height="9.00" fill="#8a1a1a"/>
<rect x="608.60" y="223.20" width="2.0" height="7.80" fill="#8b1010" stroke="#7a0d0d" stroke-width="0.4"/>
<rect x="612.20" y="218.50" width="1" height="13.60" fill="#2f7a2f"/>
<rect x="611.70" y="219.00" width="2.0" height="12.50" fill="#4e934e" stroke="#2a6a2a" stroke-width="0.4"/>
<rect x="615.40" y="234.00" width="1" height="3.50" fill="#8a1a1a"/>
<rect x="614.90" y="234.50" width="2.0" height="2.40" fill="#8b1010" stroke="#7a0d0d" stroke-width="0.4"/>
<rect x="619.00" y="232.00" width="1" height="6.10" fill="#8a1a1a"/>
<rect x="618.50" y="232.70" width="2.0" height="4.80" fill="#8b1010" stroke="#7a0d0d" stroke-width="0.4"/>
<rect x="622.00" y="235.00" width="1" height="6.70" fill="#8a1a1a"/>
<rect x="621.50" y="235.70" width="2.0" height="5.30" fill="#8b1010" stroke="#7a0d0d" stroke-width="0.4"/>
<rect x="625.00" y="234.00" width="1" height="7.10" fill="#2f7a2f"/>
<rect x="624.50" y="234.50" width="2.0" height="6.00" fill="#4e934e" stroke="#2a6a2a" stroke-width="0.4"/>
<rect x="627.90" y="232.00" width="1" height="9.10" fill="#8a1a1a"/>
<rect x="627.40" y="232.70" width="2.0" height="7.80" fill="#8b1010" stroke="#7a0d0d" stroke-width="0.4"/>
<rect x="631.30" y="236.50" width="1" height="9.80" fill="#8a1a1a"/>
<rect x="630.80" y="243.20" width="2.0" height="1.80" fill="#8b1010" stroke="#7a0d0d" stroke-width="0.4"/>
<path d="M9.60,72.20 C11.78,72.27 18.47,72.45 22.70,72.60 C26.93,72.75 31.78,72.87 35.00,73.10 C38.22,73.33 39.67,73.27 42.00,74.00 C44.33,74.73 46.10,76.33 49.00,77.50 C51.90,78.67 55.90,80.13 59.40,81.00 C62.90,81.87 66.78,81.98 70.00,82.70 C73.22,83.42 75.80,84.42 78.70,85.30 C81.60,86.18 84.18,86.97 87.40,88.00 C90.62,89.03 94.50,90.33 98.00,91.50 C101.50,92.67 104.92,93.98 108.40,95.00 C111.88,96.02 115.30,96.56 118.90,97.60 C122.50,98.64 126.48,100.22 130.00,101.25 C133.52,102.28 136.67,102.50 140.00,103.75 C143.33,105.00 146.67,107.08 150.00,108.75 C153.33,110.42 156.67,112.08 160.00,113.75 C163.33,115.42 166.67,117.29 170.00,118.75 C173.33,120.21 176.67,121.46 180.00,122.50 C183.33,123.54 186.67,124.17 190.00,125.00 C193.33,125.83 196.67,126.46 200.00,127.50 C203.33,128.54 206.67,130.08 210.00,131.25 C213.33,132.42 216.67,133.46 220.00,134.50 C223.33,135.54 226.67,136.38 230.00,137.50 C233.33,138.62 236.67,140.21 240.00,141.25 C243.33,142.29 246.67,142.79 250.00,143.75 C253.33,144.71 256.67,145.96 260.00,147.00 C263.33,148.04 266.67,148.88 270.00,150.00 C273.33,151.12 276.67,152.42 280.00,153.75 C283.33,155.08 286.67,156.75 290.00,158.00 C293.33,159.25 296.67,160.29 300.00,161.25 C303.33,162.21 306.67,163.00 310.00,163.75 C313.33,164.50 316.67,165.24 320.00,165.75 C323.33,166.26 325.00,166.09 330.00,166.80 C335.00,167.51 343.33,169.05 350.00,170.00 C356.67,170.95 363.33,171.79 370.00,172.50 C376.67,173.21 383.33,173.80 390.00,174.25 C396.67,174.70 403.33,174.87 410.00,175.20 C416.67,175.53 423.33,175.95 430.00,176.25 C436.67,176.55 443.33,176.71 450.00,177.00 C456.67,177.29 463.33,177.71 470.00,178.00 C476.67,178.29 483.33,178.60 490.00,178.75 C496.67,178.90 503.33,178.86 510.00,178.90 C516.67,178.94 521.67,178.73 530.00,179.00 C538.33,179.27 551.67,180.00 560.00,180.50 C568.33,181.00 573.33,181.48 580.00,182.00 C586.67,182.52 593.33,183.10 600.00,183.60 C606.67,184.10 614.83,184.60 620.00,185.00 C625.17,185.40 629.17,185.83 631.00,186.00" fill="none" stroke-width="1.15" stroke="#f24a4a"/>
<path d="M9.00,170.50 C9.95,170.70 12.08,172.33 14.70,171.70 C17.32,171.07 21.65,168.65 24.70,166.70 C27.75,164.75 30.23,162.37 33.00,160.00 C35.77,157.63 38.52,154.87 41.30,152.50 C44.08,150.13 47.42,147.97 49.70,145.80 C51.98,143.63 53.08,142.05 55.00,139.50 C56.92,136.95 58.70,133.85 61.20,130.50 C63.70,127.15 67.37,122.12 70.00,119.40 C72.63,116.68 74.97,115.37 77.00,114.20 C79.03,113.03 80.47,113.35 82.20,112.40 C83.93,111.45 85.97,109.35 87.40,108.50 C88.83,107.65 89.47,107.30 90.80,107.30 C92.13,107.30 93.53,107.22 95.40,108.50 C97.27,109.78 99.73,113.00 102.00,115.00 C104.27,117.00 106.33,118.97 109.00,120.50 C111.67,122.03 115.37,122.62 118.00,124.20 C120.63,125.78 122.53,127.53 124.80,130.00 C127.07,132.47 129.40,135.90 131.60,139.00 C133.80,142.10 135.50,146.10 138.00,148.60 C140.50,151.10 143.77,151.52 146.60,154.00 C149.43,156.48 152.15,160.83 155.00,163.50 C157.85,166.17 160.82,168.20 163.70,170.00 C166.58,171.80 169.80,173.23 172.30,174.30 C174.80,175.37 176.57,176.23 178.70,176.40 C180.83,176.57 182.97,175.12 185.10,175.30 C187.23,175.48 189.35,177.32 191.50,177.50 C193.65,177.68 196.22,176.58 198.00,176.40 C199.78,176.22 200.53,176.05 202.20,176.40 C203.87,176.75 205.95,177.73 208.00,178.50 C210.05,179.27 211.83,179.63 214.50,181.00 C217.17,182.37 220.82,185.12 224.00,186.70 C227.18,188.28 230.42,189.08 233.60,190.50 C236.78,191.92 240.25,193.62 243.10,195.20 C245.95,196.78 248.48,198.72 250.70,200.00 C252.92,201.28 254.50,202.10 256.40,202.90 C258.30,203.70 259.87,204.40 262.10,204.80 C264.33,205.20 266.82,205.60 269.80,205.30 C272.78,205.00 276.63,203.48 280.00,203.00 C283.37,202.52 286.67,202.67 290.00,202.40 C293.33,202.13 296.67,201.55 300.00,201.40 C303.33,201.25 306.67,201.23 310.00,201.50 C313.33,201.77 316.67,202.42 320.00,203.00 C323.33,203.58 326.67,204.04 330.00,205.00 C333.33,205.96 336.67,207.92 340.00,208.75 C343.33,209.58 346.67,209.71 350.00,210.00 C353.33,210.29 356.75,210.90 360.00,210.50 C363.25,210.10 366.33,208.55 369.50,207.60 C372.67,206.65 375.82,206.40 379.00,204.80 C382.18,203.20 385.43,199.92 388.60,198.00 C391.77,196.08 394.83,194.55 398.00,193.30 C401.17,192.05 404.43,191.77 407.60,190.50 C410.77,189.23 413.82,187.28 417.00,185.70 C420.18,184.12 423.50,182.28 426.70,181.00 C429.90,179.72 433.98,178.47 436.20,178.00 C438.42,177.53 437.78,177.63 440.00,178.20 C442.22,178.77 446.33,180.07 449.50,181.40 C452.67,182.73 455.82,184.77 459.00,186.20 C462.18,187.63 465.43,189.05 468.60,190.00 C471.77,190.95 474.83,191.27 478.00,191.90 C481.17,192.53 484.43,193.00 487.60,193.80 C490.77,194.60 494.45,195.90 497.00,196.70 C499.55,197.50 500.97,198.77 502.90,198.60 C504.83,198.43 506.38,197.13 508.60,195.70 C510.82,194.27 514.30,191.43 516.20,190.00 C518.10,188.57 517.70,188.35 520.00,187.10 C522.30,185.85 527.50,182.93 530.00,182.50 C532.50,182.07 532.50,183.25 535.00,184.50 C537.50,185.75 541.18,188.13 545.00,190.00 C548.82,191.87 553.62,193.43 557.90,195.70 C562.18,197.97 567.37,201.22 570.70,203.60 C574.03,205.98 575.22,207.43 577.90,210.00 C580.58,212.57 584.53,216.43 586.80,219.00 C589.07,221.57 590.12,223.73 591.50,225.40 C592.88,227.07 593.70,228.10 595.10,229.00 C596.50,229.90 598.12,230.43 599.90,230.80 C601.68,231.17 603.62,231.08 605.80,231.20 C607.98,231.32 610.62,231.38 613.00,231.50 C615.38,231.62 617.73,231.70 620.10,231.90 C622.47,232.10 625.32,232.35 627.20,232.70 C629.08,233.05 630.70,233.78 631.40,234.00" fill="none" stroke-width="1.15" stroke="#4646ee"/>
<path d="M9.00,175.20 C9.95,173.78 12.65,170.07 14.70,166.70 C16.75,163.33 19.08,159.73 21.30,155.00 C23.52,150.27 26.05,143.02 28.00,138.30 C29.95,133.58 31.33,129.88 33.00,126.70 C34.67,123.52 36.33,121.43 38.00,119.20 C39.67,116.97 41.33,114.55 43.00,113.30 C44.67,112.05 46.33,111.70 48.00,111.70 C49.67,111.70 51.10,112.75 53.00,113.30 C54.90,113.85 57.45,115.58 59.40,115.00 C61.35,114.42 62.93,112.27 64.70,109.80 C66.47,107.33 68.25,102.23 70.00,100.20 C71.75,98.17 73.47,98.03 75.20,97.60 C76.93,97.17 78.65,97.32 80.40,97.60 C82.15,97.88 83.93,97.85 85.70,99.30 C87.47,100.75 89.25,103.52 91.00,106.30 C92.75,109.08 94.47,112.65 96.20,116.00 C97.93,119.35 99.65,122.57 101.40,126.40 C103.15,130.23 104.68,135.23 106.70,139.00 C108.72,142.77 111.25,145.83 113.50,149.00 C115.75,152.17 118.52,156.28 120.20,158.00 C121.88,159.72 122.47,159.27 123.60,159.30 C124.73,159.33 125.67,157.63 127.00,158.20 C128.33,158.77 129.77,160.73 131.60,162.70 C133.43,164.67 135.87,168.07 138.00,170.00 C140.13,171.93 142.27,172.70 144.40,174.30 C146.53,175.90 148.65,179.25 150.80,179.60 C152.95,179.95 155.15,176.17 157.30,176.40 C159.45,176.63 161.57,179.23 163.70,181.00 C165.83,182.77 168.32,186.00 170.10,187.00 C171.88,188.00 172.78,187.70 174.40,187.00 C176.02,186.30 178.02,184.03 179.80,182.80 C181.58,181.57 183.15,180.13 185.10,179.60 C187.05,179.07 189.72,181.03 191.50,179.60 C193.28,178.17 194.55,173.50 195.80,171.00 C197.05,168.50 197.93,164.93 199.00,164.60 C200.07,164.27 200.70,166.50 202.20,169.00 C203.70,171.50 206.58,177.60 208.00,179.60 C209.42,181.60 209.45,179.82 210.70,181.00 C211.95,182.18 214.07,183.87 215.50,186.70 C216.93,189.53 217.88,194.83 219.30,198.00 C220.72,201.17 222.25,203.47 224.00,205.70 C225.75,207.93 227.88,209.97 229.80,211.40 C231.72,212.83 233.60,213.03 235.50,214.30 C237.40,215.57 239.45,218.38 241.20,219.00 C242.95,219.62 244.42,218.63 246.00,218.00 C247.58,217.37 248.97,216.30 250.70,215.20 C252.43,214.10 254.50,212.98 256.40,211.40 C258.30,209.82 260.18,208.23 262.10,205.70 C264.02,203.17 266.58,198.57 267.90,196.20 C269.22,193.83 268.98,192.97 270.00,191.50 C271.02,190.03 272.65,188.42 274.00,187.40 C275.35,186.38 276.75,185.40 278.10,185.40 C279.45,185.40 280.75,186.38 282.10,187.40 C283.45,188.42 284.85,190.48 286.20,191.50 C287.55,192.52 288.85,192.65 290.20,193.50 C291.55,194.35 292.95,195.25 294.30,196.60 C295.65,197.95 296.95,199.75 298.30,201.60 C299.65,203.45 301.05,205.83 302.40,207.70 C303.75,209.57 305.05,211.28 306.40,212.80 C307.75,214.32 308.80,215.45 310.50,216.80 C312.20,218.15 314.92,220.90 316.60,220.90 C318.28,220.90 319.25,218.83 320.60,216.80 C321.95,214.77 323.35,210.90 324.70,208.70 C326.05,206.50 327.35,204.78 328.70,203.60 C330.05,202.42 331.45,201.93 332.80,201.60 C334.15,201.27 335.45,201.43 336.80,201.60 C338.15,201.77 339.55,202.27 340.90,202.60 C342.25,202.93 343.38,202.92 344.90,203.60 C346.42,204.28 347.48,206.67 350.00,206.70 C352.52,206.73 356.75,204.43 360.00,203.80 C363.25,203.17 366.48,203.37 369.50,202.90 C372.52,202.43 375.87,202.28 378.10,201.00 C380.33,199.72 381.15,197.12 382.90,195.20 C384.65,193.28 386.38,192.03 388.60,189.50 C390.82,186.97 394.13,182.22 396.20,180.00 C398.27,177.78 399.42,177.53 401.00,176.20 C402.58,174.87 404.12,172.80 405.70,172.00 C407.28,171.20 408.62,171.58 410.50,171.40 C412.38,171.22 414.93,170.73 417.00,170.90 C419.07,171.07 420.97,171.90 422.90,172.40 C424.83,172.90 426.38,173.30 428.60,173.90 C430.82,174.50 434.30,174.43 436.20,176.00 C438.10,177.57 438.57,180.65 440.00,183.30 C441.43,185.95 443.22,189.67 444.80,191.90 C446.38,194.13 447.77,194.95 449.50,196.70 C451.23,198.45 453.28,200.82 455.20,202.40 C457.12,203.98 459.08,206.37 461.00,206.20 C462.92,206.03 464.80,202.83 466.70,201.40 C468.60,199.97 470.52,198.55 472.40,197.60 C474.28,196.65 475.47,196.17 478.00,195.70 C480.53,195.23 484.43,194.95 487.60,194.80 C490.77,194.65 494.45,194.65 497.00,194.80 C499.55,194.95 500.97,196.33 502.90,195.70 C504.83,195.07 506.70,192.90 508.60,191.00 C510.50,189.10 512.40,186.53 514.30,184.30 C516.20,182.07 518.22,180.40 520.00,177.60 C521.78,174.80 523.50,169.93 525.00,167.50 C526.50,165.07 527.67,162.92 529.00,163.00 C530.33,163.08 531.67,166.00 533.00,168.00 C534.33,170.00 535.75,172.83 537.00,175.00 C538.25,177.17 539.40,178.50 540.50,181.00 C541.60,183.50 542.37,184.93 543.60,190.00 C544.83,195.07 546.48,206.28 547.90,211.40 C549.32,216.52 550.92,218.43 552.10,220.70 C553.28,222.97 553.57,223.80 555.00,225.00 C556.43,226.20 558.55,226.83 560.70,227.90 C562.85,228.97 565.75,230.33 567.90,231.40 C570.05,232.47 571.70,233.47 573.60,234.30 C575.50,235.13 576.90,235.97 579.30,236.40 C581.70,236.83 585.57,237.32 588.00,236.90 C590.43,236.48 592.12,234.88 593.90,233.90 C595.68,232.92 597.12,231.88 598.70,231.00 C600.28,230.12 601.82,229.25 603.40,228.60 C604.98,227.95 606.60,227.40 608.20,227.10 C609.80,226.80 611.42,226.55 613.00,226.80 C614.58,227.05 616.12,227.82 617.70,228.60 C619.28,229.38 620.92,230.82 622.50,231.50 C624.08,232.18 625.82,232.00 627.20,232.70 C628.58,233.40 630.20,235.20 630.80,235.70" fill="none" stroke-width="1.15" stroke="#d43ad4"/>
<line x1="361" y1="48" x2="720" y2="157" stroke="#f03a3a" stroke-width="1.3"/>
<line x1="569.2" y1="245" x2="641.3" y2="243.8" stroke="#f29a9a" stroke-width="1.2"/>
<circle cx="569.2" cy="245" r="2" fill="#fff" stroke="#888" stroke-width="0.8"/>
<circle cx="641.3" cy="243.8" r="2" fill="#fff" stroke="#888" stroke-width="0.8"/>
<text x="620.80" y="259.10" font-size="9.2" font-weight="normal" fill="#2b2b2b" stroke="#2b2b2b" stroke-width="0.2" textLength="45.00" lengthAdjust="spacingAndGlyphs">new low</text>
<text x="727.00" y="57.95" font-size="8.0" font-weight="normal" fill="#2f8231" stroke="#2f8231" stroke-width="0.25" textLength="25.60" lengthAdjust="spacingAndGlyphs">27.20</text>
<text x="727.00" y="68.15" font-size="8.0" font-weight="normal" fill="#2f8231" stroke="#2f8231" stroke-width="0.25" textLength="25.60" lengthAdjust="spacingAndGlyphs">26.40</text>
<text x="727.00" y="78.35" font-size="8.0" font-weight="normal" fill="#2f8231" stroke="#2f8231" stroke-width="0.25" textLength="25.60" lengthAdjust="spacingAndGlyphs">25.60</text>
<text x="727.00" y="88.55" font-size="8.0" font-weight="normal" fill="#2f8231" stroke="#2f8231" stroke-width="0.25" textLength="25.60" lengthAdjust="spacingAndGlyphs">24.80</text>
<text x="727.00" y="98.75" font-size="8.0" font-weight="normal" fill="#2f8231" stroke="#2f8231" stroke-width="0.25" textLength="25.60" lengthAdjust="spacingAndGlyphs">24.00</text>
<text x="727.00" y="108.95" font-size="8.0" font-weight="normal" fill="#2f8231" stroke="#2f8231" stroke-width="0.25" textLength="25.60" lengthAdjust="spacingAndGlyphs">23.20</text>
<text x="727.00" y="119.15" font-size="8.0" font-weight="normal" fill="#2f8231" stroke="#2f8231" stroke-width="0.25" textLength="25.60" lengthAdjust="spacingAndGlyphs">22.40</text>
<text x="727.00" y="129.35" font-size="8.0" font-weight="normal" fill="#2f8231" stroke="#2f8231" stroke-width="0.25" textLength="25.60" lengthAdjust="spacingAndGlyphs">21.60</text>
<text x="727.00" y="139.55" font-size="8.0" font-weight="normal" fill="#2f8231" stroke="#2f8231" stroke-width="0.25" textLength="25.60" lengthAdjust="spacingAndGlyphs">20.80</text>
<text x="727.00" y="149.75" font-size="8.0" font-weight="normal" fill="#2f8231" stroke="#2f8231" stroke-width="0.25" textLength="25.60" lengthAdjust="spacingAndGlyphs">20.00</text>
<text x="727.00" y="159.95" font-size="8.0" font-weight="normal" fill="#2f8231" stroke="#2f8231" stroke-width="0.25" textLength="25.60" lengthAdjust="spacingAndGlyphs">19.20</text>
<text x="727.00" y="170.15" font-size="8.0" font-weight="normal" fill="#2f8231" stroke="#2f8231" stroke-width="0.25" textLength="25.60" lengthAdjust="spacingAndGlyphs">18.40</text>
<text x="727.00" y="180.35" font-size="8.0" font-weight="normal" fill="#2f8231" stroke="#2f8231" stroke-width="0.25" textLength="25.60" lengthAdjust="spacingAndGlyphs">17.60</text>
<text x="727.00" y="190.55" font-size="8.0" font-weight="normal" fill="#2f8231" stroke="#2f8231" stroke-width="0.25" textLength="25.60" lengthAdjust="spacingAndGlyphs">16.80</text>
<text x="727.00" y="200.75" font-size="8.0" font-weight="normal" fill="#2f8231" stroke="#2f8231" stroke-width="0.25" textLength="25.60" lengthAdjust="spacingAndGlyphs">16.00</text>
<text x="727.00" y="210.95" font-size="8.0" font-weight="normal" fill="#2f8231" stroke="#2f8231" stroke-width="0.25" textLength="25.60" lengthAdjust="spacingAndGlyphs">15.20</text>
<text x="727.00" y="221.15" font-size="8.0" font-weight="normal" fill="#2f8231" stroke="#2f8231" stroke-width="0.25" textLength="25.60" lengthAdjust="spacingAndGlyphs">14.40</text>
<text x="727.00" y="231.35" font-size="8.0" font-weight="normal" fill="#2f8231" stroke="#2f8231" stroke-width="0.25" textLength="25.60" lengthAdjust="spacingAndGlyphs">13.60</text>
<text x="727.00" y="241.55" font-size="8.0" font-weight="normal" fill="#2f8231" stroke="#2f8231" stroke-width="0.25" textLength="25.60" lengthAdjust="spacingAndGlyphs">12.80</text>
<text x="727.00" y="251.75" font-size="8.0" font-weight="normal" fill="#2f8231" stroke="#2f8231" stroke-width="0.25" textLength="25.60" lengthAdjust="spacingAndGlyphs">12.00</text>
<text x="727.00" y="261.95" font-size="8.0" font-weight="normal" fill="#2f8231" stroke="#2f8231" stroke-width="0.25" textLength="25.60" lengthAdjust="spacingAndGlyphs">11.20</text>
<text x="727.00" y="272.15" font-size="8.0" font-weight="normal" fill="#2f8231" stroke="#2f8231" stroke-width="0.25" textLength="25.60" lengthAdjust="spacingAndGlyphs">10.40</text>
<text x="727.00" y="282.35" font-size="8.0" font-weight="normal" fill="#2f8231" stroke="#2f8231" stroke-width="0.25" textLength="20.30" lengthAdjust="spacingAndGlyphs">9.60</text>
<rect x="726.80" y="240.50" width="28.50" height="8.40" rx="2" fill="#fff" stroke="#555" stroke-width="1"/>
<text x="729.00" y="247.80" font-size="8.6" font-weight="normal" fill="#333" textLength="24.00" lengthAdjust="spacingAndGlyphs">12.46</text>
<polygon points="723.8,48.5 723.8,53.5 719.2,51" fill="#c0c0c0"/>
<polygon points="723.8,247.5 723.8,252.5 719.2,250" fill="#c0c0c0"/>
<polygon points="639.5,283 645.5,283 642.5,279.5" fill="#cfcfcf"/>
<rect x="12.70" y="288.60" width="12.70" height="8.50" rx="2" fill="#fff" stroke="#8c909a" stroke-width="1"/>
<path d="M16.6,290.6 L20.8,295.2 M20.8,290.6 L16.6,295.2" stroke="#555" stroke-width="1.1"/>
<text x="35.80" y="296.90" font-size="8" font-weight="normal" fill="#cc33cc" stroke="#cc33cc" stroke-width="0.2" textLength="84.80" lengthAdjust="spacingAndGlyphs">Stochastics RSI 34</text>
<polygon points="126,293.2 131,293.2 128.5,296" fill="#777"/>
<text x="137.90" y="296.90" font-size="8" font-weight="normal" fill="#333399" stroke="#333399" stroke-width="0.2" textLength="81.30" lengthAdjust="spacingAndGlyphs">Moving Average 5</text>
<polygon points="225,293.2 230,293.2 227.5,296" fill="#777"/>
<polyline points="9.0,305.9 12.0,303.0 16.0,308.7 20.0,302.0 23.0,302.0 35.0,302.5 38.0,314.0 40.0,315.0 45.0,316.0 48.0,319.0 52.0,320.0 55.0,322.0 57.0,312.0 59.0,311.0 61.0,310.0 63.0,304.0 64.0,304.7 67.0,306.0 70.0,313.0 73.0,325.0 78.0,328.0 80.0,329.0 83.0,320.0 86.0,327.0 89.0,318.0 92.0,328.0 96.0,332.0 100.0,337.0 105.0,337.5 107.0,333.0 109.0,328.0 112.0,332.0 115.0,328.0 120.0,330.0 125.0,330.0 128.0,336.0 133.5,337.3 138.7,334.7 143.1,333.0 147.5,330.3 151.9,333.0 154.5,331.2 158.0,335.6 162.3,335.6 166.7,337.3 171.1,336.4 174.6,326.0 179.8,314.6 184.2,323.3 188.6,330.3 193.8,321.6 198.5,312.0 202.6,324.2 205.2,332.0 209.5,330.3 213.9,333.8 219.2,336.4 224.4,336.4 227.0,330.3 231.4,332.0 236.6,336.4 241.9,326.8 246.3,325.0 249.8,320.7 253.3,324.2 255.9,318.0 260.2,315.5 265.5,307.6 268.7,309.3 272.2,306.7 275.7,308.5 278.4,318.0 281.9,330.3 285.3,317.2 288.0,313.7 291.5,317.2 295.0,329.5 299.3,325.0 302.8,326.0 308.1,329.5 313.3,328.6 316.8,328.6 323.8,304.1 327.3,321.6 333.4,308.5 338.7,315.5 342.2,320.7 346.0,326.8 351.8,308.5 356.2,308.5 358.8,315.5 362.3,309.3 365.8,318.0 371.0,319.8 375.4,321.6 378.0,302.4 381.5,305.9 385.0,302.4 389.4,306.7 394.4,310.2 397.0,305.0 400.5,318.0 406.6,307.6 410.1,313.7 413.6,304.6 418.0,308.5 422.3,320.7 425.8,323.3 429.3,315.5 432.8,314.6 439.0,333.8 442.4,335.6 446.0,333.8 449.4,334.7 454.7,330.3 458.2,333.0 461.7,336.4 466.0,326.8 471.3,319.0 475.7,326.0 480.0,329.5 483.5,328.6 487.0,333.0 491.4,326.0 496.6,317.2 500.1,326.0 503.6,332.0 507.1,314.6 512.4,311.0 515.9,308.5 520.2,302.9 526.1,302.9 532.2,337.3 544.5,337.3 581.2,336.4 586.4,332.0 590.0,333.8 593.4,328.6 596.9,328.6 599.5,333.8 603.0,326.8 607.4,331.2 614.4,332.0 621.4,333.8 626.6,332.6 631.0,334.7" fill="none" stroke="#d23ad2" stroke-width="1.3" stroke-linejoin="round"/>
<path d="M9.00,308.50 C10.00,308.05 12.33,306.43 15.00,305.80 C17.67,305.17 21.67,305.17 25.00,304.70 C28.33,304.23 32.50,302.62 35.00,303.00 C37.50,303.38 38.33,305.33 40.00,307.00 C41.67,308.67 43.33,311.33 45.00,313.00 C46.67,314.67 48.33,316.08 50.00,317.00 C51.67,317.92 53.33,318.67 55.00,318.50 C56.67,318.33 58.33,317.08 60.00,316.00 C61.67,314.92 63.33,312.92 65.00,312.00 C66.67,311.08 68.33,309.67 70.00,310.50 C71.67,311.33 73.33,314.92 75.00,317.00 C76.67,319.08 78.33,321.67 80.00,323.00 C81.67,324.33 83.33,324.58 85.00,325.00 C86.67,325.42 88.33,325.17 90.00,325.50 C91.67,325.83 93.33,325.92 95.00,327.00 C96.67,328.08 98.33,330.67 100.00,332.00 C101.67,333.33 103.33,334.50 105.00,335.00 C106.67,335.50 108.33,335.50 110.00,335.00 C111.67,334.50 113.33,332.83 115.00,332.00 C116.67,331.17 118.33,330.33 120.00,330.00 C121.67,329.67 123.33,329.50 125.00,330.00 C126.67,330.50 128.30,332.07 130.00,333.00 C131.70,333.93 133.45,335.10 135.20,335.60 C136.95,336.10 138.45,336.30 140.50,336.00 C142.55,335.70 145.17,334.47 147.50,333.80 C149.83,333.13 152.17,332.00 154.50,332.00 C156.83,332.00 158.88,333.07 161.50,333.80 C164.12,334.53 167.87,336.53 170.20,336.40 C172.53,336.27 173.75,334.60 175.50,333.00 C177.25,331.40 178.95,328.42 180.70,326.80 C182.45,325.18 184.25,324.02 186.00,323.30 C187.75,322.58 189.60,322.35 191.20,322.50 C192.80,322.65 193.85,324.35 195.60,324.20 C197.35,324.05 199.82,321.75 201.70,321.60 C203.58,321.45 205.15,322.43 206.90,323.30 C208.65,324.17 210.45,325.18 212.20,326.80 C213.95,328.42 215.37,331.68 217.40,333.00 C219.43,334.32 222.07,334.57 224.40,334.70 C226.73,334.83 229.07,334.08 231.40,333.80 C233.73,333.52 236.07,333.43 238.40,333.00 C240.73,332.57 243.07,332.53 245.40,331.20 C247.73,329.87 249.78,327.12 252.40,325.00 C255.02,322.88 258.97,320.08 261.10,318.50 C263.23,316.92 263.63,316.75 265.20,315.50 C266.77,314.25 268.75,312.03 270.50,311.00 C272.25,309.97 273.67,308.55 275.70,309.30 C277.73,310.05 280.52,314.05 282.70,315.50 C284.88,316.95 286.75,316.98 288.80,318.00 C290.85,319.02 293.38,321.15 295.00,321.60 C296.62,322.05 296.47,319.83 298.50,320.70 C300.53,321.57 304.00,325.48 307.20,326.80 C310.40,328.12 315.08,329.32 317.70,328.60 C320.32,327.88 321.15,324.10 322.90,322.50 C324.65,320.90 326.30,320.75 328.20,319.00 C330.10,317.25 332.12,312.73 334.30,312.00 C336.48,311.27 338.82,313.30 341.30,314.60 C343.78,315.90 346.43,319.52 349.20,319.80 C351.97,320.08 355.28,317.60 357.90,316.30 C360.52,315.00 362.28,311.85 364.90,312.00 C367.52,312.15 370.68,317.07 373.60,317.20 C376.52,317.33 379.48,314.68 382.40,312.80 C385.32,310.92 388.97,306.77 391.10,305.90 C393.23,305.03 393.35,306.75 395.20,307.60 C397.05,308.45 399.57,310.43 402.20,311.00 C404.83,311.57 408.08,311.42 411.00,311.00 C413.92,310.58 416.20,307.62 419.70,308.50 C423.20,309.38 428.22,313.55 432.00,316.30 C435.78,319.05 439.50,322.22 442.40,325.00 C445.30,327.78 446.47,331.67 449.40,333.00 C452.33,334.33 456.78,333.58 460.00,333.00 C463.22,332.42 465.65,331.12 468.70,329.50 C471.75,327.88 475.97,324.18 478.30,323.30 C480.63,322.42 480.52,323.32 482.70,324.20 C484.88,325.08 488.78,328.47 491.40,328.60 C494.02,328.73 496.37,325.60 498.40,325.00 C500.43,324.40 501.27,326.00 503.60,325.00 C505.93,324.00 509.77,321.47 512.40,319.00 C515.03,316.53 517.10,312.53 519.40,310.20 C521.70,307.87 524.07,304.27 526.20,305.00 C528.33,305.73 530.32,311.40 532.20,314.60 C534.08,317.80 535.45,320.42 537.50,324.20 C539.55,327.98 541.58,335.27 544.50,337.30 C547.42,339.33 548.88,336.55 555.00,336.40 C561.12,336.25 575.37,336.83 581.20,336.40 C587.03,335.97 587.38,334.67 590.00,333.80 C592.62,332.93 594.58,331.92 596.90,331.20 C599.22,330.48 600.83,329.65 603.90,329.50 C606.97,329.35 612.10,329.88 615.30,330.30 C618.50,330.72 620.48,331.42 623.10,332.00 C625.72,332.58 629.68,333.50 631.00,333.80" fill="none" stroke="#34349a" stroke-width="1.3" stroke-linejoin="round"/>
<text x="726.80" y="306.10" font-size="8.6" font-weight="normal" fill="#cc33cc" stroke="#cc33cc" stroke-width="0.22" textLength="31.40" lengthAdjust="spacingAndGlyphs">100.00</text>
<text x="726.80" y="322.80" font-size="8.6" font-weight="normal" fill="#cc33cc" stroke="#cc33cc" stroke-width="0.22" textLength="25.60" lengthAdjust="spacingAndGlyphs">50.00</text>
<rect x="726.70" y="331.70" width="22.80" height="8.40" rx="2" fill="#fff" stroke="#555" stroke-width="1"/>
<text x="728.60" y="339.00" font-size="8.6" font-weight="normal" fill="#333" textLength="19.20" lengthAdjust="spacingAndGlyphs">7.65</text>
<polygon points="723.8,303.9 723.8,308.9 719.2,306.4" fill="#c0c0c0"/>
<polygon points="723.8,337.0 723.8,342.0 719.2,339.5" fill="#c0c0c0"/>
<rect x="12.70" y="346.80" width="12.70" height="8.30" rx="2" fill="#fff" stroke="#8c909a" stroke-width="1"/>
<path d="M16.6,348.7 L20.8,353.2 M20.8,348.7 L16.6,353.2" stroke="#555" stroke-width="1.1"/>
<text x="35.80" y="354.90" font-size="8" font-weight="normal" fill="#3a9aaa" stroke="#3a9aaa" stroke-width="0.2" textLength="56.00" lengthAdjust="spacingAndGlyphs">MACD 12 26</text>
<polygon points="96.8,351.2 101.8,351.2 99.3,354" fill="#777"/>
<text x="108.40" y="354.90" font-size="8" font-weight="normal" fill="#333399" stroke="#333399" stroke-width="0.2" textLength="102.00" lengthAdjust="spacingAndGlyphs">Exp Moving Average 9</text>
<polygon points="214.5,351.2 219.5,351.2 217.0,354" fill="#777"/>
<text x="227.00" y="354.90" font-size="8" font-weight="normal" fill="#3a8a3a" stroke="#3a8a3a" stroke-width="0.2" textLength="116.00" lengthAdjust="spacingAndGlyphs">MACD Histogram 12 26 9</text>
<polygon points="347.5,351.2 352.5,351.2 350.0,354" fill="#777"/>
<rect x="9.25" y="369.72" width="1.5" height="2.88" fill="#3a863a"/>
<rect x="12.47" y="368.14" width="1.5" height="4.46" fill="#3a863a"/>
<rect x="15.69" y="367.85" width="1.5" height="4.75" fill="#3a863a"/>
<rect x="18.91" y="366.86" width="1.5" height="5.74" fill="#3a863a"/>
<rect x="22.13" y="364.40" width="1.5" height="8.20" fill="#3a863a"/>
<rect x="25.35" y="363.05" width="1.5" height="9.55" fill="#3a863a"/>
<rect x="28.57" y="361.76" width="1.5" height="10.84" fill="#3a863a"/>
<rect x="31.79" y="360.16" width="1.5" height="12.44" fill="#3a863a"/>
<rect x="35.01" y="358.40" width="1.5" height="14.20" fill="#3a863a"/>
<rect x="38.23" y="361.35" width="1.5" height="11.25" fill="#3a863a"/>
<rect x="41.45" y="364.07" width="1.5" height="8.53" fill="#3a863a"/>
<rect x="44.67" y="366.87" width="1.5" height="5.73" fill="#3a863a"/>
<rect x="47.89" y="370.48" width="1.5" height="2.12" fill="#3a863a"/>
<rect x="54.33" y="372.60" width="1.5" height="1.42" fill="#a82a2a"/>
<rect x="60.77" y="370.41" width="1.5" height="2.19" fill="#3a863a"/>
<rect x="63.99" y="366.49" width="1.5" height="6.11" fill="#3a863a"/>
<rect x="67.21" y="366.02" width="1.5" height="6.58" fill="#3a863a"/>
<rect x="70.43" y="369.14" width="1.5" height="3.46" fill="#3a863a"/>
<rect x="73.65" y="372.60" width="1.5" height="0.97" fill="#a82a2a"/>
<rect x="76.87" y="372.60" width="1.5" height="4.14" fill="#a82a2a"/>
<rect x="80.09" y="372.60" width="1.5" height="6.85" fill="#a82a2a"/>
<rect x="83.31" y="372.60" width="1.5" height="6.37" fill="#a82a2a"/>
<rect x="86.53" y="372.60" width="1.5" height="6.80" fill="#a82a2a"/>
<rect x="89.75" y="372.60" width="1.5" height="6.27" fill="#a82a2a"/>
<rect x="92.97" y="372.60" width="1.5" height="7.50" fill="#a82a2a"/>
<rect x="96.19" y="372.60" width="1.5" height="9.27" fill="#a82a2a"/>
<rect x="99.41" y="372.60" width="1.5" height="11.98" fill="#a82a2a"/>
<rect x="102.63" y="372.60" width="1.5" height="15.98" fill="#a82a2a"/>
<rect x="105.85" y="372.60" width="1.5" height="17.78" fill="#a82a2a"/>
<rect x="109.07" y="372.60" width="1.5" height="15.45" fill="#a82a2a"/>
<rect x="112.29" y="372.60" width="1.5" height="13.76" fill="#a82a2a"/>
<rect x="115.51" y="372.60" width="1.5" height="10.54" fill="#a82a2a"/>
<rect x="118.73" y="372.60" width="1.5" height="7.75" fill="#a82a2a"/>
<rect x="121.95" y="372.60" width="1.5" height="6.70" fill="#a82a2a"/>
<rect x="125.17" y="372.60" width="1.5" height="5.08" fill="#a82a2a"/>
<rect x="128.39" y="372.60" width="1.5" height="7.31" fill="#a82a2a"/>
<rect x="131.61" y="372.60" width="1.5" height="8.70" fill="#a82a2a"/>
<rect x="134.83" y="372.60" width="1.5" height="8.66" fill="#a82a2a"/>
<rect x="138.05" y="372.60" width="1.5" height="7.00" fill="#a82a2a"/>
<rect x="141.27" y="372.60" width="1.5" height="5.06" fill="#a82a2a"/>
<rect x="144.49" y="372.60" width="1.5" height="2.92" fill="#a82a2a"/>
<rect x="147.71" y="372.60" width="1.5" height="0.89" fill="#a82a2a"/>
<rect x="154.15" y="371.66" width="1.5" height="0.94" fill="#3a863a"/>
<rect x="160.59" y="372.60" width="1.5" height="1.34" fill="#a82a2a"/>
<rect x="163.81" y="372.60" width="1.5" height="1.69" fill="#a82a2a"/>
<rect x="167.03" y="372.60" width="1.5" height="2.19" fill="#a82a2a"/>
<rect x="170.25" y="372.60" width="1.5" height="2.26" fill="#a82a2a"/>
<rect x="176.69" y="368.27" width="1.5" height="4.33" fill="#3a863a"/>
<rect x="179.91" y="364.44" width="1.5" height="8.16" fill="#3a863a"/>
<rect x="183.13" y="364.60" width="1.5" height="8.00" fill="#3a863a"/>
<rect x="186.35" y="366.44" width="1.5" height="6.16" fill="#3a863a"/>
<rect x="189.57" y="368.20" width="1.5" height="4.40" fill="#3a863a"/>
<rect x="192.79" y="367.89" width="1.5" height="4.71" fill="#3a863a"/>
<rect x="196.01" y="366.27" width="1.5" height="6.33" fill="#3a863a"/>
<rect x="199.23" y="366.31" width="1.5" height="6.29" fill="#3a863a"/>
<rect x="202.45" y="368.82" width="1.5" height="3.78" fill="#3a863a"/>
<rect x="205.67" y="371.98" width="1.5" height="0.62" fill="#3a863a"/>
<rect x="208.89" y="372.60" width="1.5" height="1.11" fill="#a82a2a"/>
<rect x="212.11" y="372.60" width="1.5" height="2.02" fill="#a82a2a"/>
<rect x="215.33" y="372.60" width="1.5" height="3.60" fill="#a82a2a"/>
<rect x="218.55" y="372.60" width="1.5" height="5.20" fill="#a82a2a"/>
<rect x="221.77" y="372.60" width="1.5" height="5.57" fill="#a82a2a"/>
<rect x="224.99" y="372.60" width="1.5" height="6.85" fill="#a82a2a"/>
<rect x="228.21" y="372.60" width="1.5" height="5.75" fill="#a82a2a"/>
<rect x="231.43" y="372.60" width="1.5" height="4.34" fill="#a82a2a"/>
<rect x="234.65" y="372.60" width="1.5" height="3.94" fill="#a82a2a"/>
<rect x="237.87" y="372.60" width="1.5" height="4.40" fill="#a82a2a"/>
<rect x="241.09" y="372.60" width="1.5" height="3.06" fill="#a82a2a"/>
<rect x="244.31" y="372.60" width="1.5" height="1.11" fill="#a82a2a"/>
<rect x="247.53" y="371.73" width="1.5" height="0.87" fill="#3a863a"/>
<rect x="250.75" y="369.40" width="1.5" height="3.20" fill="#3a863a"/>
<rect x="253.97" y="367.49" width="1.5" height="5.11" fill="#3a863a"/>
<rect x="257.19" y="366.04" width="1.5" height="6.56" fill="#3a863a"/>
<rect x="260.41" y="364.93" width="1.5" height="7.67" fill="#3a863a"/>
<rect x="263.63" y="363.90" width="1.5" height="8.70" fill="#3a863a"/>
<rect x="266.85" y="362.76" width="1.5" height="9.84" fill="#3a863a"/>
<rect x="270.07" y="362.26" width="1.5" height="10.34" fill="#3a863a"/>
<rect x="273.29" y="362.11" width="1.5" height="10.49" fill="#3a863a"/>
<rect x="276.51" y="364.09" width="1.5" height="8.51" fill="#3a863a"/>
<rect x="279.73" y="368.58" width="1.5" height="4.02" fill="#3a863a"/>
<rect x="282.95" y="370.35" width="1.5" height="2.25" fill="#3a863a"/>
<rect x="286.17" y="370.50" width="1.5" height="2.10" fill="#3a863a"/>
<rect x="289.39" y="371.37" width="1.5" height="1.23" fill="#3a863a"/>
<rect x="295.83" y="372.60" width="1.5" height="2.19" fill="#a82a2a"/>
<rect x="299.05" y="372.60" width="1.5" height="3.40" fill="#a82a2a"/>
<rect x="302.27" y="372.60" width="1.5" height="4.14" fill="#a82a2a"/>
<rect x="305.49" y="372.60" width="1.5" height="4.40" fill="#a82a2a"/>
<rect x="308.71" y="372.60" width="1.5" height="4.40" fill="#a82a2a"/>
<rect x="311.93" y="372.60" width="1.5" height="3.31" fill="#a82a2a"/>
<rect x="315.15" y="372.60" width="1.5" height="2.30" fill="#a82a2a"/>
<rect x="318.37" y="372.60" width="1.5" height="1.26" fill="#a82a2a"/>
<rect x="321.59" y="371.46" width="1.5" height="1.14" fill="#3a863a"/>
<rect x="324.81" y="370.00" width="1.5" height="2.60" fill="#3a863a"/>
<rect x="328.03" y="369.62" width="1.5" height="2.98" fill="#3a863a"/>
<rect x="331.25" y="368.79" width="1.5" height="3.81" fill="#3a863a"/>
<rect x="334.47" y="368.52" width="1.5" height="4.08" fill="#3a863a"/>
<rect x="337.69" y="369.50" width="1.5" height="3.10" fill="#3a863a"/>
<rect x="340.91" y="370.29" width="1.5" height="2.31" fill="#3a863a"/>
<rect x="344.13" y="371.14" width="1.5" height="1.46" fill="#3a863a"/>
<rect x="347.35" y="371.76" width="1.5" height="0.84" fill="#3a863a"/>
<rect x="350.57" y="370.70" width="1.5" height="1.90" fill="#3a863a"/>
<rect x="353.79" y="369.96" width="1.5" height="2.64" fill="#3a863a"/>
<rect x="357.01" y="369.14" width="1.5" height="3.46" fill="#3a863a"/>
<rect x="360.23" y="369.89" width="1.5" height="2.71" fill="#3a863a"/>
<rect x="363.45" y="370.00" width="1.5" height="2.60" fill="#3a863a"/>
<rect x="366.67" y="371.08" width="1.5" height="1.52" fill="#3a863a"/>
<rect x="369.89" y="371.82" width="1.5" height="0.78" fill="#3a863a"/>
<rect x="373.11" y="371.44" width="1.5" height="1.16" fill="#3a863a"/>
<rect x="376.33" y="370.52" width="1.5" height="2.08" fill="#3a863a"/>
<rect x="379.55" y="369.28" width="1.5" height="3.32" fill="#3a863a"/>
<rect x="382.77" y="367.08" width="1.5" height="5.52" fill="#3a863a"/>
<rect x="385.99" y="365.15" width="1.5" height="7.45" fill="#3a863a"/>
<rect x="389.21" y="365.08" width="1.5" height="7.52" fill="#3a863a"/>
<rect x="392.43" y="365.30" width="1.5" height="7.30" fill="#3a863a"/>
<rect x="395.65" y="365.03" width="1.5" height="7.57" fill="#3a863a"/>
<rect x="398.87" y="366.91" width="1.5" height="5.69" fill="#3a863a"/>
<rect x="402.09" y="369.14" width="1.5" height="3.46" fill="#3a863a"/>
<rect x="405.31" y="369.31" width="1.5" height="3.29" fill="#3a863a"/>
<rect x="408.53" y="369.10" width="1.5" height="3.50" fill="#3a863a"/>
<rect x="411.75" y="369.10" width="1.5" height="3.50" fill="#3a863a"/>
<rect x="414.97" y="369.83" width="1.5" height="2.77" fill="#3a863a"/>
<rect x="418.19" y="370.63" width="1.5" height="1.97" fill="#3a863a"/>
<rect x="421.41" y="371.65" width="1.5" height="0.95" fill="#3a863a"/>
<rect x="424.63" y="372.60" width="1.5" height="1.55" fill="#a82a2a"/>
<rect x="427.85" y="372.60" width="1.5" height="2.11" fill="#a82a2a"/>
<rect x="431.07" y="372.60" width="1.5" height="1.20" fill="#a82a2a"/>
<rect x="434.29" y="372.60" width="1.5" height="2.50" fill="#a82a2a"/>
<rect x="437.51" y="372.60" width="1.5" height="4.91" fill="#a82a2a"/>
<rect x="440.73" y="372.60" width="1.5" height="7.78" fill="#a82a2a"/>
<rect x="443.95" y="372.60" width="1.5" height="8.19" fill="#a82a2a"/>
<rect x="447.17" y="372.60" width="1.5" height="8.35" fill="#a82a2a"/>
<rect x="450.39" y="372.60" width="1.5" height="7.88" fill="#a82a2a"/>
<rect x="453.61" y="372.60" width="1.5" height="6.64" fill="#a82a2a"/>
<rect x="456.83" y="372.60" width="1.5" height="5.80" fill="#a82a2a"/>
<rect x="460.05" y="372.60" width="1.5" height="4.95" fill="#a82a2a"/>
<rect x="463.27" y="372.60" width="1.5" height="3.85" fill="#a82a2a"/>
<rect x="466.49" y="372.60" width="1.5" height="2.41" fill="#a82a2a"/>
<rect x="472.93" y="371.44" width="1.5" height="1.16" fill="#3a863a"/>
<rect x="476.15" y="371.40" width="1.5" height="1.20" fill="#3a863a"/>
<rect x="479.37" y="370.95" width="1.5" height="1.65" fill="#3a863a"/>
<rect x="482.59" y="371.63" width="1.5" height="0.97" fill="#3a863a"/>
<rect x="492.25" y="371.98" width="1.5" height="0.62" fill="#3a863a"/>
<rect x="495.47" y="370.99" width="1.5" height="1.61" fill="#3a863a"/>
<rect x="498.69" y="370.58" width="1.5" height="2.02" fill="#3a863a"/>
<rect x="501.91" y="370.80" width="1.5" height="1.80" fill="#3a863a"/>
<rect x="505.13" y="370.57" width="1.5" height="2.03" fill="#3a863a"/>
<rect x="508.35" y="369.05" width="1.5" height="3.55" fill="#3a863a"/>
<rect x="511.57" y="368.22" width="1.5" height="4.38" fill="#3a863a"/>
<rect x="514.79" y="367.39" width="1.5" height="5.21" fill="#3a863a"/>
<rect x="518.01" y="365.91" width="1.5" height="6.69" fill="#3a863a"/>
<rect x="521.23" y="363.91" width="1.5" height="8.69" fill="#3a863a"/>
<rect x="524.45" y="360.31" width="1.5" height="12.29" fill="#3a863a"/>
<rect x="527.67" y="363.77" width="1.5" height="8.83" fill="#3a863a"/>
<rect x="530.89" y="368.64" width="1.5" height="3.96" fill="#3a863a"/>
<rect x="534.11" y="372.60" width="1.5" height="1.88" fill="#a82a2a"/>
<rect x="537.33" y="372.60" width="1.5" height="6.57" fill="#a82a2a"/>
<rect x="540.55" y="372.60" width="1.5" height="9.75" fill="#a82a2a"/>
<rect x="543.77" y="372.60" width="1.5" height="11.40" fill="#a82a2a"/>
<rect x="546.99" y="372.60" width="1.5" height="12.14" fill="#a82a2a"/>
<rect x="550.21" y="372.60" width="1.5" height="11.52" fill="#a82a2a"/>
<rect x="553.43" y="372.60" width="1.5" height="10.63" fill="#a82a2a"/>
<rect x="556.65" y="372.60" width="1.5" height="9.85" fill="#a82a2a"/>
<rect x="559.87" y="372.60" width="1.5" height="8.57" fill="#a82a2a"/>
<rect x="563.09" y="372.60" width="1.5" height="7.26" fill="#a82a2a"/>
<rect x="566.31" y="372.60" width="1.5" height="5.70" fill="#a82a2a"/>
<rect x="569.53" y="372.60" width="1.5" height="5.20" fill="#a82a2a"/>
<rect x="572.75" y="372.60" width="1.5" height="4.75" fill="#a82a2a"/>
<rect x="575.97" y="372.60" width="1.5" height="3.92" fill="#a82a2a"/>
<rect x="579.19" y="372.60" width="1.5" height="2.99" fill="#a82a2a"/>
<rect x="582.41" y="372.60" width="1.5" height="1.65" fill="#a82a2a"/>
<rect x="588.85" y="371.59" width="1.5" height="1.01" fill="#3a863a"/>
<rect x="592.07" y="369.49" width="1.5" height="3.11" fill="#3a863a"/>
<rect x="595.29" y="368.44" width="1.5" height="4.16" fill="#3a863a"/>
<rect x="598.51" y="368.20" width="1.5" height="4.40" fill="#3a863a"/>
<rect x="601.73" y="367.48" width="1.5" height="5.12" fill="#3a863a"/>
<rect x="604.95" y="367.30" width="1.5" height="5.30" fill="#3a863a"/>
<rect x="608.17" y="368.11" width="1.5" height="4.49" fill="#3a863a"/>
<rect x="611.39" y="368.96" width="1.5" height="3.64" fill="#3a863a"/>
<rect x="614.61" y="369.78" width="1.5" height="2.82" fill="#3a863a"/>
<rect x="617.83" y="370.54" width="1.5" height="2.06" fill="#3a863a"/>
<rect x="621.05" y="371.17" width="1.5" height="1.43" fill="#3a863a"/>
<rect x="624.27" y="371.40" width="1.5" height="1.20" fill="#3a863a"/>
<rect x="627.49" y="371.68" width="1.5" height="0.92" fill="#3a863a"/>
<rect x="630.71" y="372.00" width="1.5" height="0.60" fill="#3a863a"/>
<path d="M9.60,373.10 C10.92,372.58 14.73,371.25 17.50,370.00 C20.27,368.75 23.28,367.50 26.20,365.60 C29.12,363.70 32.37,359.62 35.00,358.60 C37.63,357.58 39.67,358.93 42.00,359.50 C44.33,360.07 46.97,361.27 49.00,362.00 C51.03,362.73 52.47,363.90 54.20,363.90 C55.93,363.90 57.65,362.88 59.40,362.00 C61.15,361.12 63.10,359.32 64.70,358.60 C66.30,357.88 67.55,357.55 69.00,357.70 C70.45,357.85 72.07,358.62 73.40,359.50 C74.73,360.38 75.53,361.98 77.00,363.00 C78.47,364.02 80.47,364.88 82.20,365.60 C83.93,366.32 85.37,366.43 87.40,367.30 C89.43,368.17 92.07,369.35 94.40,370.80 C96.73,372.25 99.37,374.10 101.40,376.00 C103.43,377.90 104.85,380.87 106.60,382.20 C108.35,383.53 109.85,383.57 111.90,384.00 C113.95,384.43 116.87,384.67 118.90,384.80 C120.93,384.93 122.35,384.22 124.10,384.80 C125.85,385.38 127.65,387.38 129.40,388.30 C131.15,389.22 132.75,389.85 134.60,390.30 C136.45,390.75 138.35,391.18 140.50,391.00 C142.65,390.82 144.88,389.65 147.50,389.20 C150.12,388.75 153.28,388.30 156.20,388.30 C159.12,388.30 162.37,388.92 165.00,389.20 C167.63,389.48 170.25,390.15 172.00,390.00 C173.75,389.85 173.77,389.60 175.50,388.30 C177.23,387.00 180.08,383.08 182.40,382.20 C184.72,381.32 187.35,383.15 189.40,383.00 C191.45,382.85 192.95,381.87 194.70,381.30 C196.45,380.73 198.15,379.60 199.90,379.60 C201.65,379.60 203.15,380.43 205.20,381.30 C207.25,382.17 209.58,383.63 212.20,384.80 C214.82,385.97 217.98,387.57 220.90,388.30 C223.82,389.03 227.08,388.75 229.70,389.20 C232.32,389.65 234.57,390.70 236.60,391.00 C238.63,391.30 239.85,391.45 241.90,391.00 C243.95,390.55 246.57,389.33 248.90,388.30 C251.23,387.27 253.57,385.97 255.90,384.80 C258.23,383.63 261.05,382.47 262.90,381.30 C264.75,380.13 265.15,378.97 267.00,377.80 C268.85,376.63 271.67,374.43 274.00,374.30 C276.33,374.17 278.67,376.42 281.00,377.00 C283.33,377.58 285.67,377.22 288.00,377.80 C290.33,378.38 292.38,379.77 295.00,380.50 C297.62,381.23 300.20,381.48 303.70,382.20 C307.20,382.92 312.78,384.95 316.00,384.80 C319.22,384.65 320.67,382.32 323.00,381.30 C325.33,380.28 327.67,379.28 330.00,378.70 C332.33,378.12 334.67,377.65 337.00,377.80 C339.33,377.95 341.10,379.73 344.00,379.60 C346.90,379.47 350.92,377.43 354.40,377.00 C357.88,376.57 361.40,377.00 364.90,377.00 C368.40,377.00 372.48,377.45 375.40,377.00 C378.32,376.55 380.07,375.22 382.40,374.30 C384.73,373.38 386.97,372.17 389.40,371.50 C391.83,370.83 393.98,370.55 397.00,370.30 C400.02,370.05 404.00,370.35 407.50,370.00 C411.00,369.65 415.08,368.07 418.00,368.20 C420.92,368.33 422.08,369.92 425.00,370.80 C427.92,371.68 432.60,372.33 435.50,373.50 C438.40,374.67 440.08,376.63 442.40,377.80 C444.72,378.97 447.07,380.00 449.40,380.50 C451.73,381.00 454.07,380.45 456.40,380.80 C458.73,381.15 461.07,382.80 463.40,382.60 C465.73,382.40 467.48,380.10 470.40,379.60 C473.32,379.10 477.40,379.75 480.90,379.60 C484.40,379.45 487.90,379.00 491.40,378.70 C494.90,378.40 498.40,378.38 501.90,377.80 C505.40,377.22 509.48,376.22 512.40,375.20 C515.32,374.18 517.37,373.15 519.40,371.70 C521.43,370.25 523.33,367.23 524.60,366.50 C525.87,365.77 525.73,366.43 527.00,367.30 C528.27,368.17 530.45,369.95 532.20,371.70 C533.95,373.45 535.45,375.92 537.50,377.80 C539.55,379.68 541.58,381.53 544.50,383.00 C547.42,384.47 551.50,385.72 555.00,386.60 C558.50,387.48 562.00,387.73 565.50,388.30 C569.00,388.87 572.80,389.90 576.00,390.00 C579.20,390.10 581.80,389.62 584.70,388.90 C587.60,388.18 590.78,386.52 593.40,385.70 C596.02,384.88 598.07,384.52 600.40,384.00 C602.73,383.48 605.07,382.90 607.40,382.60 C609.73,382.30 612.07,382.13 614.40,382.20 C616.73,382.27 618.63,382.77 621.40,383.00 C624.17,383.23 629.40,383.50 631.00,383.60" fill="none" stroke="#3aa0a8" stroke-width="1.3" stroke-linejoin="round"/>
<path d="M9.60,374.30 C10.92,373.87 14.73,372.58 17.50,371.70 C20.27,370.82 23.28,370.02 26.20,369.00 C29.12,367.98 32.08,366.60 35.00,365.60 C37.92,364.60 40.80,363.50 43.70,363.00 C46.60,362.50 49.48,362.77 52.40,362.60 C55.32,362.43 58.27,362.52 61.20,362.00 C64.13,361.48 67.08,359.50 70.00,359.50 C72.92,359.50 75.80,361.13 78.70,362.00 C81.60,362.87 84.48,363.67 87.40,364.70 C90.32,365.73 93.28,366.73 96.20,368.20 C99.12,369.67 102.00,371.75 104.90,373.50 C107.80,375.25 110.68,377.12 113.60,378.70 C116.52,380.28 119.50,381.87 122.40,383.00 C125.30,384.13 128.28,384.90 131.00,385.50 C133.72,386.10 135.95,386.13 138.70,386.60 C141.45,387.07 143.12,388.02 147.50,388.30 C151.88,388.58 160.92,388.15 165.00,388.30 C169.08,388.45 169.10,389.48 172.00,389.20 C174.90,388.92 179.20,387.33 182.40,386.60 C185.60,385.87 187.98,385.53 191.20,384.80 C194.42,384.07 198.20,382.33 201.70,382.20 C205.20,382.07 208.70,383.27 212.20,384.00 C215.70,384.73 219.50,385.88 222.70,386.60 C225.90,387.32 228.20,387.80 231.40,388.30 C234.60,388.80 238.40,389.73 241.90,389.60 C245.40,389.47 248.90,388.43 252.40,387.50 C255.90,386.57 260.18,384.88 262.90,384.00 C265.62,383.12 266.27,383.08 268.70,382.20 C271.13,381.32 274.28,379.43 277.50,378.70 C280.72,377.97 284.50,377.65 288.00,377.80 C291.50,377.95 295.00,378.87 298.50,379.60 C302.00,380.33 305.52,381.63 309.00,382.20 C312.48,382.77 315.90,383.28 319.40,383.00 C322.90,382.72 326.50,381.07 330.00,380.50 C333.50,379.93 336.90,379.90 340.40,379.60 C343.90,379.30 347.50,379.00 351.00,378.70 C354.50,378.40 357.90,377.95 361.40,377.80 C364.90,377.65 368.50,378.10 372.00,377.80 C375.50,377.50 378.92,376.87 382.40,376.00 C385.88,375.13 390.18,373.47 392.90,372.60 C395.62,371.73 395.68,371.10 398.70,370.80 C401.72,370.50 407.20,371.08 411.00,370.80 C414.80,370.52 418.00,369.10 421.50,369.10 C425.00,369.10 428.52,369.93 432.00,370.80 C435.48,371.67 438.90,373.27 442.40,374.30 C445.90,375.33 449.50,376.12 453.00,377.00 C456.50,377.88 459.90,379.02 463.40,379.60 C466.90,380.18 470.50,380.35 474.00,380.50 C477.50,380.65 480.90,380.80 484.40,380.50 C487.90,380.20 491.50,379.15 495.00,378.70 C498.50,378.25 501.90,378.25 505.40,377.80 C508.90,377.35 512.80,376.72 516.00,376.00 C519.20,375.28 521.90,374.22 524.60,373.50 C527.30,372.78 529.77,371.42 532.20,371.70 C534.63,371.98 536.57,373.88 539.20,375.20 C541.83,376.52 544.78,378.13 548.00,379.60 C551.22,381.07 555.00,382.83 558.50,384.00 C562.00,385.17 564.92,385.73 569.00,386.60 C573.08,387.47 578.93,389.05 583.00,389.20 C587.07,389.35 589.90,388.23 593.40,387.50 C596.90,386.77 600.50,385.45 604.00,384.80 C607.50,384.15 611.50,383.90 614.40,383.60 C617.30,383.30 618.63,383.00 621.40,383.00 C624.17,383.00 629.40,383.50 631.00,383.60" fill="none" stroke="#3a3aa6" stroke-width="1.3" stroke-linejoin="round"/>
<text x="726.80" y="361.50" font-size="8.6" font-weight="normal" fill="#3a9aaa" stroke="#3a9aaa" stroke-width="0.22" textLength="19.70" lengthAdjust="spacingAndGlyphs">1.60</text>
<text x="726.80" y="370.90" font-size="8.6" font-weight="normal" fill="#3a9aaa" stroke="#3a9aaa" stroke-width="0.22" textLength="19.70" lengthAdjust="spacingAndGlyphs">0.80</text>
<text x="726.80" y="380.00" font-size="8.6" font-weight="normal" fill="#3a9aaa" stroke="#3a9aaa" stroke-width="0.22" textLength="19.70" lengthAdjust="spacingAndGlyphs">0.00</text>
<rect x="726.70" y="380.50" width="26.80" height="8.30" rx="2" fill="#fff" stroke="#555" stroke-width="1"/>
<text x="728.60" y="387.70" font-size="8.6" font-weight="normal" fill="#333" textLength="23.00" lengthAdjust="spacingAndGlyphs">-0.51</text>
<text x="758.20" y="364.40" font-size="8.6" font-weight="normal" fill="#4a9a4a" stroke="#4a9a4a" stroke-width="0.22" textLength="20.10" lengthAdjust="spacingAndGlyphs">0.50</text>
<rect x="758.40" y="369.10" width="22.90" height="8.20" rx="2" fill="#fff" stroke="#555" stroke-width="1"/>
<text x="760.30" y="376.20" font-size="8.6" font-weight="normal" fill="#333" textLength="19.10" lengthAdjust="spacingAndGlyphs">0.00</text>
<text x="758.20" y="386.60" font-size="8.6" font-weight="normal" fill="#4a9a4a" stroke="#4a9a4a" stroke-width="0.22" textLength="24.00" lengthAdjust="spacingAndGlyphs">-0.50</text>
<rect x="772.6" y="388.8" width="13.1" height="6.6" rx="2" fill="#c4c4c4"/>
<path d="M777.6,389.8 L781.2,392.1 L777.6,394.4" stroke="#fff" stroke-width="1.4" fill="none"/>
<polygon points="723.8,358.2 723.8,363.2 719.2,360.7" fill="#c0c0c0"/>
<polygon points="723.8,390.9 723.8,395.9 719.2,393.4" fill="#c0c0c0"/>
<text x="56.80" y="402.70" font-size="8" font-weight="normal" fill="#333" textLength="14.90" lengthAdjust="spacingAndGlyphs">Jun</text>
<text x="125.00" y="402.70" font-size="8" font-weight="normal" fill="#333" textLength="12.00" lengthAdjust="spacingAndGlyphs">Jul</text>
<text x="189.40" y="402.70" font-size="8" font-weight="normal" fill="#333" textLength="18.60" lengthAdjust="spacingAndGlyphs">Aug</text>
<text x="263.00" y="402.70" font-size="8" font-weight="normal" fill="#333" textLength="18.00" lengthAdjust="spacingAndGlyphs">Sep</text>
<text x="325.30" y="402.70" font-size="8" font-weight="normal" fill="#333" textLength="15.70" lengthAdjust="spacingAndGlyphs">Oct</text>
<text x="391.60" y="402.70" font-size="8" font-weight="normal" fill="#333" textLength="17.60" lengthAdjust="spacingAndGlyphs">Nov</text>
<text x="459.00" y="402.70" font-size="8" font-weight="normal" fill="#333" textLength="18.80" lengthAdjust="spacingAndGlyphs">Dec</text>
<text x="524.50" y="402.70" font-size="8" font-weight="normal" fill="#333" textLength="15.50" lengthAdjust="spacingAndGlyphs">Jan</text>
<text x="655.50" y="402.70" font-size="8" font-weight="normal" fill="#333" textLength="17.00" lengthAdjust="spacingAndGlyphs">Mar</text>
<text x="521.00" y="410.70" font-size="8" font-weight="normal" fill="#333" textLength="22.00" lengthAdjust="spacingAndGlyphs">2013</text>
<text x="603.00" y="406.20" font-size="7" font-weight="normal" fill="#333" textLength="39.00" lengthAdjust="spacingAndGlyphs">2/15/2013</text>
<text x="10.50" y="411.00" font-size="8" font-weight="normal" fill="#333" textLength="10.00" lengthAdjust="spacingAndGlyphs">12</text>
</svg></body></html>
